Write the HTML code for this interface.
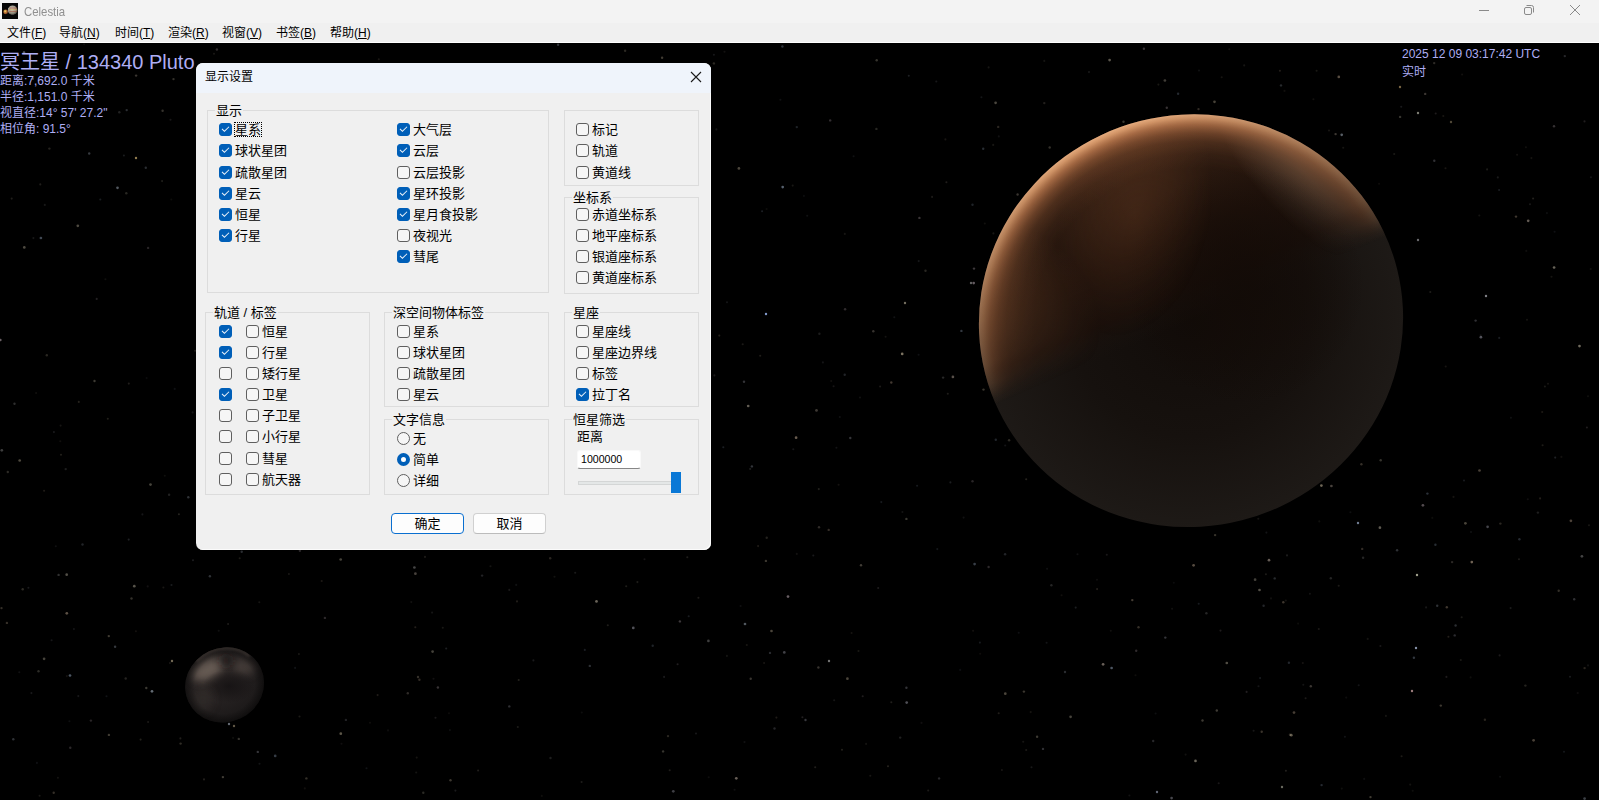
<!DOCTYPE html>
<html lang="zh-CN">
<head>
<meta charset="utf-8">
<title>Celestia</title>
<style>
*{box-sizing:border-box;margin:0;padding:0}
html,body{width:1599px;height:800px;overflow:hidden;background:#000}
body{position:relative;font-family:"Liberation Sans","Noto Sans CJK SC",sans-serif;font-size:12px;color:#000}
i{font-style:normal;display:block}
#titlebar{position:absolute;left:0;top:0;width:1599px;height:23px;background:#f3f3f3}
#menubar{position:absolute;left:0;top:23px;width:1599px;height:20px;background:#f0f0f0;border-bottom:1px solid #fff}
#apptitle{position:absolute;left:24px;top:4px;font-size:13px;line-height:15px;color:#909090;transform:scaleX(.875);transform-origin:left center;white-space:nowrap}
.mi{position:absolute;top:2px;line-height:16px;font-size:12px;white-space:nowrap}
.mi u{text-decoration:underline;text-underline-offset:1px}
#sky{position:absolute;left:0;top:43px;width:1599px;height:757px;background:#000;overflow:hidden}
.ov{position:absolute;color:#aeaef4;white-space:nowrap}
#dlg{position:absolute;left:196px;top:63px;width:515.3px;height:487px;background:#f0f0f0;border-radius:7px;overflow:hidden;box-shadow:inset -1px -1px 0 #fbfbfb}
#dlgtitle{position:absolute;left:0;top:0;width:100%;height:30px;background:#eff4fb}
#dlgtitle span{position:absolute;left:9px;top:6px;line-height:16px}
#dlgbody{position:absolute;left:-196px;top:-63px;width:1599px;height:800px}
.grp{position:absolute;border:1px solid #dcdcdc}
.lg{position:absolute;background:#f0f0f0;font-size:13px;line-height:16px;padding:0 1px;white-space:nowrap}
.cb{position:absolute;width:13px;height:13px;border:1px solid #5f5f5f;border-radius:3px;background:#f6f6f6}
.cb.on{background:#005fb8;border-color:#005fb8}
.cb.on:after{content:"";position:absolute;left:1.7px;top:2.2px;width:6.4px;height:3.2px;border-left:1px solid rgba(255,255,255,.92);border-bottom:1px solid rgba(255,255,255,.92);transform:rotate(-45deg)}
.rb{position:absolute;width:13px;height:13px;border:1px solid #5f5f5f;border-radius:50%;background:#f6f6f6}
.rb.on{border:4px solid #005fb8;background:#fff}
.lb{position:absolute;font-size:13px;line-height:16px;white-space:nowrap}
.focus{position:absolute;border:1px dotted #000}
.btn{position:absolute;font-size:13px;height:21px;border:1px solid #d0d0d0;border-bottom-color:#bcbcbc;border-radius:4px;background:#fdfdfd;text-align:center;line-height:19px}
.btn.def{border:1px solid #0a6fd0}
.inp{position:absolute;background:#fff;border:1px solid #f9f9f9;border-bottom:1px solid #868686;border-radius:3px}
.inp span{position:absolute;left:3px;top:1px;font-size:10.6px;line-height:15px}
.track{position:absolute;background:#e4e7e7;border:1px solid #d4d6d6}
.thumb{position:absolute;background:#0a78d6}
</style>
</head>
<body>
<div id="titlebar">
<svg id="appicon" width="16" height="16" viewBox="0 0 16 16" style="position:absolute;left:2px;top:3px">
<rect width="16" height="16" fill="#050505"/>
<defs><radialGradient id="jg" cx="0.45" cy="0.4" r="0.6"><stop offset="0" stop-color="#d8d4c8"/><stop offset="0.65" stop-color="#9a968a"/><stop offset="1" stop-color="#24221e"/></radialGradient>
<radialGradient id="ig" cx="0.4" cy="0.4" r="0.6"><stop offset="0" stop-color="#d8a848"/><stop offset="0.7" stop-color="#b06030"/><stop offset="1" stop-color="#4a2810"/></radialGradient></defs>
<clipPath id="jc"><circle cx="10.6" cy="7.3" r="5"/></clipPath>
<g clip-path="url(#jc)">
<circle cx="10.6" cy="7.3" r="5" fill="url(#jg)"/>
<rect x="7.5" y="4.6" width="7.6" height="0.9" fill="#a8482a" opacity=".75"/>
<rect x="7" y="6.3" width="8.4" height="0.9" fill="#c8a040" opacity=".7"/>
<rect x="7.2" y="7.9" width="8.2" height="0.9" fill="#a04a30" opacity=".7"/>
<rect x="8" y="9.6" width="6.5" height="0.8" fill="#8a8468" opacity=".6"/>
</g>
<circle cx="3.7" cy="8.9" r="2.4" fill="url(#ig)"/>
<circle cx="3.2" cy="8.2" r="0.9" fill="#e8d060" opacity=".8"/>
</svg>
<div id="apptitle">Celestia</div>
<svg class="wc" width="12" height="12" viewBox="0 0 12 12" style="position:absolute;left:1478px;top:4px"><path d="M1 6.5H11" stroke="#8a8a8a" stroke-width="1" fill="none"/></svg>
<svg class="wc" width="12" height="12" viewBox="0 0 12 12" style="position:absolute;left:1523px;top:4px"><rect x="1.5" y="3.5" width="7" height="7" rx="1.5" stroke="#8a8a8a" fill="none"/><path d="M3.5 1.5H8.5a2 2 0 0 1 2 2V8.5" stroke="#8a8a8a" fill="none"/></svg>
<svg class="wc" width="12" height="12" viewBox="0 0 12 12" style="position:absolute;left:1569px;top:4px"><path d="M1 1L11 11M11 1L1 11" stroke="#8a8a8a" stroke-width="1" fill="none"/></svg>
</div>
<div id="menubar">
<span class="mi" style="left:7px">文件(<u>F</u>)</span>
<span class="mi" style="left:59px">导航(<u>N</u>)</span>
<span class="mi" style="left:115px">时间(<u>T</u>)</span>
<span class="mi" style="left:168px">渲染(<u>R</u>)</span>
<span class="mi" style="left:222px">视窗(<u>V</u>)</span>
<span class="mi" style="left:276px">书签(<u>B</u>)</span>
<span class="mi" style="left:330px">帮助(<u>H</u>)</span>
</div>
<div id="sky">
<svg id="stars" width="1599" height="757" viewBox="0 43 1599 757" style="position:absolute;left:0;top:0">
<circle cx="517.8" cy="158.0" r="1.20" fill="#8fa0b8" opacity="0.21"/><circle cx="150.5" cy="484.6" r="1.35" fill="#a8a190" opacity="0.42"/><circle cx="693.4" cy="96.8" r="1.05" fill="#c0a890" opacity="0.13"/><circle cx="198.0" cy="212.8" r="1.20" fill="#c0a890" opacity="0.35"/><circle cx="936.3" cy="81.5" r="1.05" fill="#9a9aa8" opacity="0.15"/><circle cx="463.1" cy="153.1" r="1.05" fill="#9a9aa8" opacity="0.12"/>
<circle cx="164.8" cy="475.8" r="1.05" fill="#a8a190" opacity="0.09"/><circle cx="902.4" cy="512.0" r="1.05" fill="#8e8e8e" opacity="0.14"/><circle cx="744.5" cy="742.1" r="1.05" fill="#9a9aa8" opacity="0.11"/><circle cx="1117.7" cy="228.5" r="1.20" fill="#8e8e8e" opacity="0.28"/><circle cx="1166.4" cy="261.7" r="1.35" fill="#a89a8e" opacity="0.39"/><circle cx="263.8" cy="302.6" r="1.35" fill="#a8a190" opacity="0.48"/>
<circle cx="1222.5" cy="477.2" r="1.20" fill="#8e8e8e" opacity="0.25"/><circle cx="950.4" cy="482.4" r="1.05" fill="#9aa6b4" opacity="0.18"/><circle cx="758.1" cy="546.1" r="1.05" fill="#c0a890" opacity="0.16"/><circle cx="1588.0" cy="665.4" r="1.05" fill="#8e8e8e" opacity="0.13"/><circle cx="36.1" cy="393.0" r="1.05" fill="#b9b09c" opacity="0.09"/><circle cx="348.9" cy="261.3" r="1.20" fill="#b0a0a8" opacity="0.26"/>
<circle cx="128.8" cy="383.6" r="1.05" fill="#a89a8e" opacity="0.19"/><circle cx="1381.5" cy="254.5" r="1.05" fill="#a89a8e" opacity="0.12"/><circle cx="1531.4" cy="158.1" r="1.05" fill="#c4b69a" opacity="0.11"/><circle cx="19.3" cy="672.3" r="1.05" fill="#9a9aa8" opacity="0.11"/><circle cx="669.9" cy="323.2" r="1.20" fill="#8fa0b8" opacity="0.35"/><circle cx="1519.4" cy="539.2" r="1.20" fill="#8fa0b8" opacity="0.27"/>
<circle cx="627.4" cy="345.6" r="1.05" fill="#b9b09c" opacity="0.16"/><circle cx="304.8" cy="788.4" r="1.05" fill="#c0a890" opacity="0.09"/><circle cx="84.1" cy="44.2" r="1.05" fill="#8e8e8e" opacity="0.09"/><circle cx="981.4" cy="97.2" r="1.05" fill="#9aa6b4" opacity="0.13"/><circle cx="1527.8" cy="499.3" r="1.05" fill="#b0a0a8" opacity="0.09"/><circle cx="1588.0" cy="396.3" r="1.05" fill="#a8a190" opacity="0.09"/>
<circle cx="1198.7" cy="603.7" r="1.05" fill="#8fa0b8" opacity="0.16"/><circle cx="36.9" cy="762.9" r="1.05" fill="#8fa0b8" opacity="0.10"/><circle cx="1461.7" cy="617.2" r="1.05" fill="#a8a190" opacity="0.16"/><circle cx="1113.2" cy="241.4" r="1.05" fill="#c4b69a" opacity="0.10"/><circle cx="851.6" cy="633.0" r="1.05" fill="#c4b69a" opacity="0.11"/><circle cx="1288.9" cy="662.7" r="1.20" fill="#8fa0b8" opacity="0.24"/>
<circle cx="788.0" cy="596.6" r="1.35" fill="#b0a0a8" opacity="0.59"/><circle cx="414.4" cy="567.5" r="1.35" fill="#8e8e8e" opacity="0.49"/><circle cx="1527.0" cy="319.7" r="1.05" fill="#c4b69a" opacity="0.11"/><circle cx="540.0" cy="408.9" r="1.35" fill="#b9b09c" opacity="0.54"/><circle cx="766.7" cy="537.7" r="1.20" fill="#a8a190" opacity="0.21"/><circle cx="1454.7" cy="635.4" r="1.20" fill="#9a9aa8" opacity="0.28"/>
<circle cx="693.8" cy="524.7" r="1.05" fill="#a89a8e" opacity="0.19"/><circle cx="740.6" cy="606.0" r="1.05" fill="#9a9aa8" opacity="0.10"/><circle cx="44.1" cy="490.7" r="1.05" fill="#c0a890" opacity="0.16"/><circle cx="1321.6" cy="785.1" r="1.20" fill="#8fa0b8" opacity="0.26"/><circle cx="876.7" cy="60.2" r="1.20" fill="#a8a190" opacity="0.32"/><circle cx="842.0" cy="749.8" r="1.05" fill="#c4b69a" opacity="0.18"/>
<circle cx="44.8" cy="204.9" r="1.05" fill="#8e8e8e" opacity="0.17"/><circle cx="414.7" cy="360.8" r="1.05" fill="#8e8e8e" opacity="0.19"/><circle cx="1435.4" cy="544.8" r="1.20" fill="#8fa0b8" opacity="0.28"/><circle cx="209.1" cy="158.8" r="1.05" fill="#9a9aa8" opacity="0.18"/><circle cx="973.1" cy="630.7" r="1.05" fill="#c0a890" opacity="0.10"/><circle cx="1159.6" cy="464.7" r="1.05" fill="#8fa0b8" opacity="0.14"/>
<circle cx="771.5" cy="631.0" r="1.35" fill="#c4b69a" opacity="0.38"/><circle cx="442.8" cy="627.8" r="1.05" fill="#a8a190" opacity="0.15"/><circle cx="708.8" cy="507.1" r="1.05" fill="#9aa6b4" opacity="0.14"/><circle cx="723.3" cy="447.2" r="1.05" fill="#8fa0b8" opacity="0.19"/><circle cx="1401.6" cy="756.3" r="1.05" fill="#c4b69a" opacity="0.15"/><circle cx="1343.2" cy="147.7" r="1.05" fill="#a8a190" opacity="0.13"/>
<circle cx="1073.2" cy="367.8" r="1.05" fill="#a8a190" opacity="0.12"/><circle cx="1434.3" cy="160.8" r="1.20" fill="#9a9aa8" opacity="0.31"/><circle cx="404.7" cy="147.8" r="1.05" fill="#a8a190" opacity="0.17"/><circle cx="636.8" cy="412.4" r="1.35" fill="#9a9aa8" opacity="0.60"/><circle cx="1129.4" cy="795.5" r="1.05" fill="#8e8e8e" opacity="0.13"/><circle cx="509.3" cy="589.9" r="1.05" fill="#b0a0a8" opacity="0.15"/>
<circle cx="1124.3" cy="334.6" r="1.05" fill="#a8a190" opacity="0.12"/><circle cx="180.4" cy="738.4" r="1.05" fill="#a8a190" opacity="0.19"/><circle cx="424.6" cy="73.9" r="1.20" fill="#9a9aa8" opacity="0.24"/><circle cx="1310.8" cy="686.3" r="1.20" fill="#a89a8e" opacity="0.35"/><circle cx="238.8" cy="738.9" r="1.20" fill="#a8a190" opacity="0.31"/><circle cx="446.2" cy="648.5" r="1.05" fill="#9aa6b4" opacity="0.19"/>
<circle cx="1500.4" cy="523.6" r="1.20" fill="#c4b69a" opacity="0.21"/><circle cx="106.5" cy="696.3" r="1.05" fill="#8fa0b8" opacity="0.12"/><circle cx="668.0" cy="736.1" r="1.20" fill="#c4b69a" opacity="0.21"/><circle cx="1500.1" cy="776.7" r="1.05" fill="#9aa6b4" opacity="0.10"/><circle cx="1005.2" cy="445.5" r="1.05" fill="#9a9aa8" opacity="0.13"/><circle cx="432.6" cy="651.6" r="1.35" fill="#b9b09c" opacity="0.37"/>
<circle cx="1172.2" cy="460.6" r="1.05" fill="#b0a0a8" opacity="0.14"/><circle cx="169.9" cy="663.1" r="1.05" fill="#a89a8e" opacity="0.14"/><circle cx="1551.5" cy="276.7" r="1.05" fill="#c4b69a" opacity="0.11"/><circle cx="1330.8" cy="578.3" r="1.20" fill="#8e8e8e" opacity="0.26"/><circle cx="1570.0" cy="676.8" r="1.05" fill="#9aa6b4" opacity="0.16"/><circle cx="688.8" cy="85.9" r="1.20" fill="#8fa0b8" opacity="0.26"/>
<circle cx="1072.2" cy="257.1" r="1.05" fill="#b0a0a8" opacity="0.12"/><circle cx="296.4" cy="247.4" r="1.05" fill="#8e8e8e" opacity="0.12"/><circle cx="1555.2" cy="457.6" r="1.05" fill="#9aa6b4" opacity="0.20"/><circle cx="348.4" cy="182.3" r="1.05" fill="#9aa6b4" opacity="0.09"/><circle cx="803.9" cy="195.9" r="1.05" fill="#9aa6b4" opacity="0.08"/><circle cx="1306.5" cy="152.8" r="1.20" fill="#9aa6b4" opacity="0.26"/>
<circle cx="486.5" cy="220.0" r="1.20" fill="#9a9aa8" opacity="0.28"/><circle cx="1051.4" cy="585.3" r="1.20" fill="#8e8e8e" opacity="0.26"/><circle cx="1152.4" cy="417.6" r="1.05" fill="#9a9aa8" opacity="0.15"/><circle cx="70.0" cy="675.5" r="1.35" fill="#8fa0b8" opacity="0.54"/><circle cx="222.8" cy="440.0" r="1.05" fill="#b9b09c" opacity="0.18"/><circle cx="1321.4" cy="485.6" r="1.35" fill="#c4b69a" opacity="0.56"/>
<circle cx="136.1" cy="75.6" r="1.20" fill="#a89a8e" opacity="0.35"/><circle cx="1336.5" cy="466.2" r="1.20" fill="#c4b69a" opacity="0.30"/><circle cx="782.4" cy="46.5" r="1.20" fill="#8fa0b8" opacity="0.32"/><circle cx="1435.7" cy="113.5" r="1.05" fill="#b0a0a8" opacity="0.17"/><circle cx="403.3" cy="100.3" r="1.05" fill="#c4b69a" opacity="0.17"/><circle cx="368.9" cy="535.3" r="1.05" fill="#a8a190" opacity="0.18"/>
<circle cx="765.9" cy="560.9" r="1.20" fill="#c4b69a" opacity="0.30"/><circle cx="123.9" cy="155.5" r="1.05" fill="#9aa6b4" opacity="0.17"/><circle cx="993.2" cy="144.9" r="1.05" fill="#a8a190" opacity="0.14"/><circle cx="1106.8" cy="554.8" r="1.05" fill="#b0a0a8" opacity="0.14"/><circle cx="745.0" cy="624.0" r="1.35" fill="#9aa6b4" opacity="0.52"/><circle cx="1564.0" cy="751.8" r="1.05" fill="#8fa0b8" opacity="0.14"/>
<circle cx="1548.0" cy="383.8" r="1.05" fill="#c4b69a" opacity="0.11"/><circle cx="119.3" cy="112.3" r="1.20" fill="#8e8e8e" opacity="0.24"/><circle cx="212.0" cy="664.1" r="1.05" fill="#8e8e8e" opacity="0.19"/><circle cx="370.0" cy="722.7" r="1.05" fill="#b9b09c" opacity="0.08"/><circle cx="1519.0" cy="559.3" r="1.05" fill="#a89a8e" opacity="0.17"/><circle cx="550.0" cy="283.0" r="1.20" fill="#8e8e8e" opacity="0.20"/>
<circle cx="1341.7" cy="134.8" r="1.35" fill="#9aa6b4" opacity="0.57"/><circle cx="404.9" cy="93.1" r="1.05" fill="#a8a190" opacity="0.18"/><circle cx="576.8" cy="367.6" r="1.05" fill="#a8a190" opacity="0.09"/><circle cx="82.5" cy="544.5" r="1.20" fill="#9aa6b4" opacity="0.22"/><circle cx="697.5" cy="282.6" r="1.20" fill="#a89a8e" opacity="0.33"/><circle cx="1413.9" cy="657.8" r="1.20" fill="#8fa0b8" opacity="0.35"/>
<circle cx="878.2" cy="588.0" r="1.05" fill="#b0a0a8" opacity="0.17"/><circle cx="983.2" cy="148.8" r="1.20" fill="#8fa0b8" opacity="0.28"/><circle cx="203.6" cy="401.0" r="1.05" fill="#9aa6b4" opacity="0.12"/><circle cx="649.5" cy="224.4" r="1.05" fill="#a8a190" opacity="0.16"/><circle cx="267.6" cy="166.2" r="1.05" fill="#b0a0a8" opacity="0.19"/><circle cx="880.1" cy="386.5" r="1.05" fill="#a89a8e" opacity="0.17"/>
<circle cx="223.2" cy="189.5" r="1.05" fill="#a8a190" opacity="0.12"/><circle cx="510.5" cy="322.4" r="1.20" fill="#b9b09c" opacity="0.23"/><circle cx="1198.7" cy="356.1" r="1.05" fill="#a89a8e" opacity="0.14"/><circle cx="432.1" cy="612.6" r="1.05" fill="#8e8e8e" opacity="0.15"/><circle cx="201.3" cy="424.6" r="1.20" fill="#c4b69a" opacity="0.34"/><circle cx="148.1" cy="722.0" r="1.05" fill="#a89a8e" opacity="0.16"/>
<circle cx="1525.4" cy="685.6" r="1.20" fill="#b9b09c" opacity="0.20"/><circle cx="679.9" cy="621.4" r="1.20" fill="#b0a0a8" opacity="0.35"/><circle cx="0.3" cy="340.0" r="1.35" fill="#b0a0a8" opacity="0.60"/><circle cx="1554.6" cy="231.8" r="1.05" fill="#8fa0b8" opacity="0.10"/><circle cx="1554.0" cy="126.3" r="1.20" fill="#b0a0a8" opacity="0.31"/><circle cx="135.9" cy="631.3" r="1.05" fill="#c0a890" opacity="0.10"/>
<circle cx="1471.0" cy="532.0" r="1.05" fill="#9aa6b4" opacity="0.10"/><circle cx="844.7" cy="374.7" r="1.20" fill="#9aa6b4" opacity="0.22"/><circle cx="838.6" cy="484.7" r="1.05" fill="#c0a890" opacity="0.11"/><circle cx="1.8" cy="450.3" r="1.35" fill="#8e8e8e" opacity="0.44"/><circle cx="1030.7" cy="712.1" r="1.05" fill="#c4b69a" opacity="0.11"/><circle cx="46.8" cy="355.3" r="1.20" fill="#c4b69a" opacity="0.21"/>
<circle cx="796.8" cy="553.9" r="1.05" fill="#a89a8e" opacity="0.11"/><circle cx="1479.3" cy="215.5" r="1.05" fill="#a89a8e" opacity="0.12"/><circle cx="579.3" cy="343.6" r="1.05" fill="#8fa0b8" opacity="0.12"/><circle cx="107.8" cy="418.7" r="1.05" fill="#c4b69a" opacity="0.17"/><circle cx="369.1" cy="211.4" r="1.20" fill="#c0a890" opacity="0.25"/><circle cx="792.7" cy="185.6" r="1.05" fill="#b9b09c" opacity="0.13"/>
<circle cx="1517.1" cy="154.7" r="1.05" fill="#c0a890" opacity="0.11"/><circle cx="226.9" cy="83.2" r="1.05" fill="#8e8e8e" opacity="0.13"/><circle cx="1171.6" cy="798.1" r="1.35" fill="#9a9aa8" opacity="0.46"/><circle cx="1043.3" cy="440.7" r="1.05" fill="#a89a8e" opacity="0.12"/><circle cx="1341.8" cy="788.6" r="1.05" fill="#a8a190" opacity="0.09"/><circle cx="447.4" cy="309.7" r="1.35" fill="#c4b69a" opacity="0.40"/>
<circle cx="607.8" cy="625.2" r="1.05" fill="#a8a190" opacity="0.18"/><circle cx="78.8" cy="401.9" r="1.05" fill="#c4b69a" opacity="0.19"/><circle cx="517.0" cy="601.4" r="1.05" fill="#c4b69a" opacity="0.16"/><circle cx="1298.1" cy="623.6" r="1.05" fill="#a8a190" opacity="0.08"/><circle cx="1284.5" cy="90.9" r="1.05" fill="#c0a890" opacity="0.09"/><circle cx="542.2" cy="249.9" r="1.35" fill="#9aa6b4" opacity="0.54"/>
<circle cx="1193.6" cy="565.3" r="1.35" fill="#c0a890" opacity="0.45"/><circle cx="1465.4" cy="523.3" r="1.35" fill="#c4b69a" opacity="0.37"/><circle cx="171.5" cy="585.0" r="1.05" fill="#9aa6b4" opacity="0.17"/><circle cx="1460.8" cy="660.0" r="1.05" fill="#b9b09c" opacity="0.14"/><circle cx="1283.3" cy="602.3" r="1.20" fill="#c0a890" opacity="0.32"/><circle cx="377.6" cy="695.1" r="1.05" fill="#c0a890" opacity="0.17"/>
<circle cx="126.3" cy="193.2" r="1.20" fill="#a8a190" opacity="0.24"/><circle cx="1038.6" cy="408.2" r="1.05" fill="#a89a8e" opacity="0.10"/><circle cx="1412.7" cy="790.8" r="1.05" fill="#a8a190" opacity="0.09"/><circle cx="673.3" cy="791.3" r="1.35" fill="#9a9aa8" opacity="0.41"/><circle cx="666.5" cy="513.0" r="1.20" fill="#a8a190" opacity="0.32"/><circle cx="1246.8" cy="266.2" r="1.05" fill="#9aa6b4" opacity="0.11"/>
<circle cx="1180.2" cy="194.6" r="1.05" fill="#9a9aa8" opacity="0.11"/><circle cx="449.9" cy="730.1" r="1.05" fill="#9aa6b4" opacity="0.09"/><circle cx="1586.9" cy="427.5" r="1.05" fill="#b0a0a8" opacity="0.18"/><circle cx="1584.5" cy="121.4" r="1.05" fill="#b0a0a8" opacity="0.18"/><circle cx="1462.1" cy="74.5" r="1.05" fill="#c4b69a" opacity="0.09"/><circle cx="960.2" cy="669.9" r="1.05" fill="#8fa0b8" opacity="0.09"/>
<circle cx="1384.9" cy="383.5" r="1.05" fill="#b9b09c" opacity="0.17"/><circle cx="169.1" cy="494.7" r="1.20" fill="#8e8e8e" opacity="0.23"/><circle cx="543.7" cy="77.4" r="1.35" fill="#c4b69a" opacity="0.37"/><circle cx="1302.8" cy="663.0" r="1.05" fill="#c0a890" opacity="0.12"/><circle cx="499.2" cy="197.8" r="1.20" fill="#a8a190" opacity="0.29"/><circle cx="652.7" cy="645.7" r="1.20" fill="#8fa0b8" opacity="0.22"/>
<circle cx="145.8" cy="167.7" r="1.20" fill="#9aa6b4" opacity="0.27"/><circle cx="1067.8" cy="359.9" r="1.05" fill="#8e8e8e" opacity="0.17"/><circle cx="662.1" cy="57.8" r="1.20" fill="#c4b69a" opacity="0.33"/><circle cx="624.8" cy="350.2" r="1.35" fill="#9a9aa8" opacity="0.49"/><circle cx="677.6" cy="664.2" r="1.05" fill="#b0a0a8" opacity="0.19"/><circle cx="1236.1" cy="142.3" r="1.05" fill="#a89a8e" opacity="0.10"/>
<circle cx="142.4" cy="514.4" r="1.05" fill="#9a9aa8" opacity="0.14"/><circle cx="556.4" cy="166.3" r="1.05" fill="#a89a8e" opacity="0.09"/><circle cx="784.3" cy="652.4" r="1.35" fill="#9a9aa8" opacity="0.42"/><circle cx="1338.8" cy="76.9" r="1.35" fill="#c0a890" opacity="0.45"/><circle cx="1480.9" cy="337.2" r="1.35" fill="#9a9aa8" opacity="0.54"/><circle cx="1023.9" cy="691.6" r="1.20" fill="#c4b69a" opacity="0.30"/>
<circle cx="1325.9" cy="182.3" r="1.05" fill="#8fa0b8" opacity="0.13"/><circle cx="250.2" cy="315.6" r="1.05" fill="#c4b69a" opacity="0.20"/><circle cx="65.7" cy="469.1" r="1.20" fill="#8e8e8e" opacity="0.21"/><circle cx="188.3" cy="497.2" r="1.20" fill="#9aa6b4" opacity="0.30"/><circle cx="1037.8" cy="277.0" r="1.05" fill="#8e8e8e" opacity="0.13"/><circle cx="714.4" cy="375.4" r="1.05" fill="#b0a0a8" opacity="0.15"/>
<circle cx="744.0" cy="381.8" r="1.20" fill="#9a9aa8" opacity="0.33"/><circle cx="1296.0" cy="346.7" r="1.05" fill="#8e8e8e" opacity="0.12"/><circle cx="146.6" cy="378.1" r="1.05" fill="#9a9aa8" opacity="0.08"/><circle cx="131.5" cy="598.5" r="1.20" fill="#b9b09c" opacity="0.28"/><circle cx="1202.5" cy="720.5" r="1.20" fill="#b9b09c" opacity="0.33"/><circle cx="1370.5" cy="797.1" r="1.20" fill="#c4b69a" opacity="0.33"/>
<circle cx="210.5" cy="713.6" r="1.05" fill="#9a9aa8" opacity="0.18"/><circle cx="1097.1" cy="589.1" r="1.05" fill="#c0a890" opacity="0.18"/><circle cx="1209.1" cy="164.0" r="1.35" fill="#b0a0a8" opacity="0.44"/><circle cx="229.6" cy="423.7" r="1.35" fill="#9aa6b4" opacity="0.42"/><circle cx="984.8" cy="223.5" r="1.05" fill="#a89a8e" opacity="0.10"/><circle cx="257.8" cy="751.9" r="1.20" fill="#9a9aa8" opacity="0.34"/>
<circle cx="1266.6" cy="243.8" r="1.20" fill="#8e8e8e" opacity="0.21"/><circle cx="1544.9" cy="386.5" r="1.05" fill="#a8a190" opacity="0.16"/><circle cx="403.0" cy="449.0" r="1.20" fill="#8e8e8e" opacity="0.32"/><circle cx="423.3" cy="792.8" r="1.20" fill="#a8a190" opacity="0.26"/><circle cx="707.2" cy="177.6" r="1.20" fill="#8fa0b8" opacity="0.21"/><circle cx="405.6" cy="527.3" r="1.35" fill="#8e8e8e" opacity="0.53"/>
<circle cx="1172.1" cy="608.8" r="1.05" fill="#a89a8e" opacity="0.11"/><circle cx="667.9" cy="319.3" r="1.05" fill="#c0a890" opacity="0.14"/><circle cx="1044.3" cy="60.9" r="1.05" fill="#a8a190" opacity="0.12"/><circle cx="836.4" cy="447.8" r="1.05" fill="#9a9aa8" opacity="0.12"/><circle cx="326.5" cy="515.7" r="1.05" fill="#c4b69a" opacity="0.10"/><circle cx="1131.2" cy="384.8" r="1.05" fill="#9aa6b4" opacity="0.10"/>
<circle cx="642.7" cy="243.8" r="1.05" fill="#8fa0b8" opacity="0.16"/><circle cx="1427.4" cy="493.6" r="1.20" fill="#8fa0b8" opacity="0.30"/><circle cx="1172.9" cy="231.9" r="1.35" fill="#8fa0b8" opacity="0.37"/><circle cx="40.3" cy="184.4" r="1.05" fill="#a8a190" opacity="0.19"/><circle cx="19.7" cy="460.5" r="1.35" fill="#c4b69a" opacity="0.40"/><circle cx="828.7" cy="529.9" r="1.20" fill="#c0a890" opacity="0.27"/>
<circle cx="279.2" cy="277.9" r="1.05" fill="#b0a0a8" opacity="0.09"/><circle cx="1143.9" cy="48.8" r="1.20" fill="#b0a0a8" opacity="0.32"/><circle cx="128.7" cy="539.6" r="1.05" fill="#9aa6b4" opacity="0.20"/><circle cx="371.4" cy="73.3" r="1.05" fill="#9aa6b4" opacity="0.17"/><circle cx="1138.0" cy="245.1" r="1.20" fill="#8fa0b8" opacity="0.27"/><circle cx="1554.1" cy="267.5" r="1.35" fill="#a8a190" opacity="0.62"/>
<circle cx="1407.2" cy="55.5" r="1.05" fill="#c4b69a" opacity="0.11"/><circle cx="1510.6" cy="608.1" r="1.05" fill="#8e8e8e" opacity="0.19"/><circle cx="961.4" cy="330.9" r="1.20" fill="#8fa0b8" opacity="0.35"/><circle cx="750.7" cy="678.8" r="1.20" fill="#a89a8e" opacity="0.34"/><circle cx="1528.2" cy="220.8" r="1.35" fill="#a89a8e" opacity="0.59"/><circle cx="995.6" cy="102.8" r="1.35" fill="#b9b09c" opacity="0.40"/>
<circle cx="178.9" cy="514.2" r="1.05" fill="#b9b09c" opacity="0.20"/><circle cx="49.4" cy="148.6" r="1.20" fill="#a8a190" opacity="0.21"/><circle cx="1178.1" cy="93.7" r="1.20" fill="#8fa0b8" opacity="0.26"/><circle cx="1425.2" cy="93.9" r="1.20" fill="#a89a8e" opacity="0.35"/><circle cx="171.3" cy="199.5" r="1.05" fill="#a8a190" opacity="0.08"/><circle cx="1319.3" cy="521.4" r="1.05" fill="#a8a190" opacity="0.09"/>
<circle cx="1266.4" cy="532.6" r="1.05" fill="#9aa6b4" opacity="0.12"/><circle cx="33.4" cy="238.1" r="1.05" fill="#8e8e8e" opacity="0.17"/><circle cx="1455.6" cy="625.5" r="1.20" fill="#9aa6b4" opacity="0.28"/><circle cx="988.6" cy="67.4" r="1.05" fill="#a8a190" opacity="0.13"/><circle cx="554.5" cy="576.7" r="1.05" fill="#a8a190" opacity="0.11"/><circle cx="918.7" cy="261.1" r="1.05" fill="#9aa6b4" opacity="0.14"/>
<circle cx="1218.7" cy="783.3" r="1.05" fill="#b0a0a8" opacity="0.14"/><circle cx="1111.6" cy="668.0" r="1.35" fill="#8fa0b8" opacity="0.53"/><circle cx="416.7" cy="757.6" r="1.05" fill="#c4b69a" opacity="0.11"/><circle cx="796.8" cy="127.1" r="1.20" fill="#8fa0b8" opacity="0.21"/><circle cx="1258.3" cy="518.7" r="1.05" fill="#a89a8e" opacity="0.13"/><circle cx="1426.1" cy="607.4" r="1.05" fill="#8e8e8e" opacity="0.16"/>
<circle cx="329.6" cy="243.0" r="1.35" fill="#a89a8e" opacity="0.51"/><circle cx="1570.9" cy="520.8" r="1.35" fill="#c0a890" opacity="0.40"/><circle cx="1206.4" cy="613.3" r="1.20" fill="#8e8e8e" opacity="0.26"/><circle cx="834.2" cy="700.2" r="1.05" fill="#8e8e8e" opacity="0.15"/><circle cx="271.1" cy="375.7" r="1.20" fill="#9a9aa8" opacity="0.29"/><circle cx="534.2" cy="529.9" r="1.20" fill="#9aa6b4" opacity="0.28"/>
<circle cx="482.1" cy="575.6" r="1.20" fill="#9a9aa8" opacity="0.22"/><circle cx="1558.7" cy="590.7" r="1.20" fill="#c4b69a" opacity="0.26"/><circle cx="524.6" cy="187.1" r="1.35" fill="#a8a190" opacity="0.57"/><circle cx="263.2" cy="541.4" r="1.05" fill="#9a9aa8" opacity="0.10"/><circle cx="1271.0" cy="598.4" r="1.05" fill="#a8a190" opacity="0.10"/><circle cx="449.0" cy="713.2" r="1.05" fill="#a89a8e" opacity="0.08"/>
<circle cx="1108.8" cy="422.4" r="1.20" fill="#9a9aa8" opacity="0.27"/><circle cx="411.3" cy="602.1" r="1.05" fill="#a89a8e" opacity="0.11"/><circle cx="1121.2" cy="488.1" r="1.20" fill="#c0a890" opacity="0.34"/><circle cx="1363.1" cy="557.8" r="1.20" fill="#8e8e8e" opacity="0.27"/><circle cx="415.4" cy="573.7" r="1.35" fill="#a89a8e" opacity="0.43"/><circle cx="1140.3" cy="520.0" r="1.05" fill="#b0a0a8" opacity="0.13"/>
<circle cx="31.4" cy="693.1" r="1.05" fill="#9a9aa8" opacity="0.16"/><circle cx="1430.3" cy="292.0" r="1.05" fill="#a8a190" opacity="0.18"/><circle cx="61.0" cy="454.8" r="1.05" fill="#c4b69a" opacity="0.17"/><circle cx="830.2" cy="120.4" r="1.20" fill="#b0a0a8" opacity="0.29"/><circle cx="819.0" cy="527.3" r="1.20" fill="#a89a8e" opacity="0.28"/><circle cx="1186.6" cy="389.4" r="1.35" fill="#8fa0b8" opacity="0.41"/>
<circle cx="1219.6" cy="136.5" r="1.35" fill="#b9b09c" opacity="0.46"/><circle cx="403.7" cy="332.7" r="1.05" fill="#a89a8e" opacity="0.09"/><circle cx="1005.1" cy="554.2" r="1.20" fill="#9aa6b4" opacity="0.22"/><circle cx="1185.6" cy="754.6" r="1.05" fill="#a89a8e" opacity="0.11"/><circle cx="738.9" cy="168.4" r="1.35" fill="#c4b69a" opacity="0.38"/><circle cx="750.2" cy="468.9" r="1.05" fill="#8e8e8e" opacity="0.20"/>
<circle cx="1065.0" cy="672.0" r="1.20" fill="#9aa6b4" opacity="0.27"/><circle cx="1215.1" cy="535.1" r="1.20" fill="#c4b69a" opacity="0.28"/><circle cx="427.6" cy="328.4" r="1.05" fill="#9a9aa8" opacity="0.13"/><circle cx="770.0" cy="652.9" r="1.20" fill="#9aa6b4" opacity="0.26"/><circle cx="512.2" cy="410.6" r="1.20" fill="#8e8e8e" opacity="0.21"/><circle cx="244.3" cy="273.2" r="1.05" fill="#c0a890" opacity="0.09"/>
<circle cx="1448.4" cy="636.7" r="1.05" fill="#c0a890" opacity="0.18"/><circle cx="24.0" cy="52.7" r="1.35" fill="#9aa6b4" opacity="0.55"/><circle cx="972.5" cy="481.3" r="1.20" fill="#b0a0a8" opacity="0.23"/><circle cx="554.0" cy="159.4" r="1.35" fill="#9a9aa8" opacity="0.59"/><circle cx="974.6" cy="564.1" r="1.35" fill="#8fa0b8" opacity="0.39"/><circle cx="1260.1" cy="678.1" r="1.05" fill="#8fa0b8" opacity="0.16"/>
<circle cx="125.7" cy="678.5" r="1.20" fill="#a8a190" opacity="0.22"/><circle cx="422.9" cy="221.0" r="1.05" fill="#b9b09c" opacity="0.14"/><circle cx="774.5" cy="728.5" r="1.20" fill="#9a9aa8" opacity="0.24"/><circle cx="862.7" cy="696.3" r="1.05" fill="#b0a0a8" opacity="0.18"/><circle cx="1112.7" cy="420.2" r="1.05" fill="#a89a8e" opacity="0.14"/><circle cx="669.7" cy="770.2" r="1.05" fill="#b9b09c" opacity="0.16"/>
<circle cx="32.9" cy="78.7" r="1.20" fill="#a8a190" opacity="0.36"/><circle cx="816.5" cy="410.4" r="1.35" fill="#a89a8e" opacity="0.37"/><circle cx="999.8" cy="300.0" r="1.20" fill="#b0a0a8" opacity="0.26"/><circle cx="1244.9" cy="462.9" r="1.35" fill="#8e8e8e" opacity="0.44"/><circle cx="675.4" cy="462.8" r="1.20" fill="#b0a0a8" opacity="0.25"/><circle cx="645.6" cy="424.8" r="1.05" fill="#c4b69a" opacity="0.14"/>
<circle cx="1046.6" cy="642.7" r="1.05" fill="#9aa6b4" opacity="0.12"/><circle cx="204.0" cy="779.4" r="1.05" fill="#a89a8e" opacity="0.20"/><circle cx="1155.6" cy="713.5" r="1.05" fill="#9aa6b4" opacity="0.09"/><circle cx="173.5" cy="79.1" r="1.20" fill="#b9b09c" opacity="0.28"/><circle cx="1261.7" cy="731.8" r="1.20" fill="#c0a890" opacity="0.30"/><circle cx="1401.2" cy="106.8" r="1.05" fill="#9a9aa8" opacity="0.16"/>
<circle cx="162.1" cy="181.1" r="1.05" fill="#b9b09c" opacity="0.17"/><circle cx="589.8" cy="665.9" r="1.20" fill="#9aa6b4" opacity="0.29"/><circle cx="1379.1" cy="183.7" r="1.05" fill="#c0a890" opacity="0.08"/><circle cx="1026.2" cy="750.0" r="1.05" fill="#b9b09c" opacity="0.15"/><circle cx="1318.8" cy="629.0" r="1.05" fill="#a89a8e" opacity="0.16"/><circle cx="713.9" cy="54.7" r="1.05" fill="#9a9aa8" opacity="0.15"/>
<circle cx="760.2" cy="355.8" r="1.05" fill="#c4b69a" opacity="0.16"/><circle cx="1432.3" cy="517.9" r="1.05" fill="#a8a190" opacity="0.08"/><circle cx="1577.7" cy="693.0" r="1.05" fill="#b0a0a8" opacity="0.09"/><circle cx="28.4" cy="587.8" r="1.05" fill="#9a9aa8" opacity="0.17"/><circle cx="1475.6" cy="320.6" r="1.20" fill="#9a9aa8" opacity="0.31"/><circle cx="1166.8" cy="107.7" r="1.20" fill="#b0a0a8" opacity="0.31"/>
<circle cx="1070.6" cy="716.8" r="1.35" fill="#b9b09c" opacity="0.38"/><circle cx="18.2" cy="55.1" r="1.20" fill="#a8a190" opacity="0.33"/><circle cx="621.9" cy="280.2" r="1.20" fill="#b0a0a8" opacity="0.35"/><circle cx="973.7" cy="283.1" r="1.35" fill="#b0a0a8" opacity="0.57"/><circle cx="1082.3" cy="153.5" r="1.20" fill="#9a9aa8" opacity="0.26"/><circle cx="1006.9" cy="360.0" r="1.05" fill="#9aa6b4" opacity="0.17"/>
<circle cx="1254.6" cy="472.5" r="1.05" fill="#c0a890" opacity="0.09"/><circle cx="530.9" cy="502.0" r="1.35" fill="#c0a890" opacity="0.60"/><circle cx="1331.4" cy="486.0" r="1.35" fill="#a89a8e" opacity="0.43"/><circle cx="1095.0" cy="498.9" r="1.35" fill="#9aa6b4" opacity="0.59"/><circle cx="1101.0" cy="287.1" r="1.05" fill="#b9b09c" opacity="0.10"/><circle cx="461.3" cy="150.3" r="1.35" fill="#9a9aa8" opacity="0.65"/>
<circle cx="437.9" cy="687.5" r="1.20" fill="#b0a0a8" opacity="0.31"/><circle cx="554.6" cy="108.3" r="1.20" fill="#c4b69a" opacity="0.33"/><circle cx="1259.5" cy="590.0" r="1.35" fill="#b9b09c" opacity="0.45"/><circle cx="1083.6" cy="395.8" r="1.05" fill="#b9b09c" opacity="0.11"/><circle cx="1265.9" cy="391.5" r="1.05" fill="#a8a190" opacity="0.18"/><circle cx="372.4" cy="482.2" r="1.35" fill="#8fa0b8" opacity="0.62"/>
<circle cx="513.3" cy="426.7" r="1.05" fill="#a8a190" opacity="0.11"/><circle cx="288.9" cy="574.0" r="1.05" fill="#a89a8e" opacity="0.15"/><circle cx="1246.6" cy="691.9" r="1.05" fill="#b0a0a8" opacity="0.19"/><circle cx="598.1" cy="124.2" r="1.20" fill="#9a9aa8" opacity="0.33"/><circle cx="504.9" cy="67.0" r="1.05" fill="#a8a190" opacity="0.15"/><circle cx="53.7" cy="792.7" r="1.20" fill="#c0a890" opacity="0.28"/>
<circle cx="341.5" cy="743.7" r="1.05" fill="#b0a0a8" opacity="0.09"/><circle cx="1226.8" cy="663.0" r="1.35" fill="#b9b09c" opacity="0.43"/><circle cx="541.8" cy="795.9" r="1.05" fill="#b9b09c" opacity="0.08"/><circle cx="891.3" cy="702.2" r="1.05" fill="#a8a190" opacity="0.19"/><circle cx="1379.9" cy="527.7" r="1.35" fill="#a8a190" opacity="0.56"/><circle cx="411.3" cy="470.7" r="1.20" fill="#8fa0b8" opacity="0.35"/>
<circle cx="628.6" cy="382.9" r="1.05" fill="#c4b69a" opacity="0.20"/><circle cx="275.2" cy="755.9" r="1.35" fill="#8fa0b8" opacity="0.38"/><circle cx="1446.4" cy="676.9" r="1.05" fill="#b0a0a8" opacity="0.17"/><circle cx="89.2" cy="153.5" r="1.20" fill="#9aa6b4" opacity="0.35"/><circle cx="943.1" cy="377.6" r="1.20" fill="#8e8e8e" opacity="0.28"/><circle cx="411.0" cy="137.9" r="1.05" fill="#c4b69a" opacity="0.10"/>
<circle cx="1291.3" cy="735.2" r="1.35" fill="#c4b69a" opacity="0.50"/><circle cx="1277.4" cy="162.7" r="1.20" fill="#c0a890" opacity="0.21"/><circle cx="1385.9" cy="715.9" r="1.05" fill="#a8a190" opacity="0.13"/><circle cx="1480.6" cy="335.1" r="1.05" fill="#8e8e8e" opacity="0.09"/><circle cx="515.8" cy="220.8" r="1.05" fill="#8e8e8e" opacity="0.12"/><circle cx="354.4" cy="86.9" r="1.20" fill="#9a9aa8" opacity="0.29"/>
<circle cx="701.9" cy="156.9" r="1.05" fill="#b9b09c" opacity="0.11"/><circle cx="433.5" cy="678.7" r="1.05" fill="#b0a0a8" opacity="0.10"/><circle cx="174.7" cy="388.9" r="1.05" fill="#8fa0b8" opacity="0.10"/><circle cx="90.9" cy="720.6" r="1.20" fill="#b0a0a8" opacity="0.23"/><circle cx="1335.6" cy="134.1" r="1.20" fill="#a89a8e" opacity="0.36"/><circle cx="1584.6" cy="798.6" r="1.35" fill="#9aa6b4" opacity="0.39"/>
<circle cx="664.6" cy="166.6" r="1.20" fill="#9a9aa8" opacity="0.36"/><circle cx="1564.8" cy="56.1" r="1.20" fill="#9a9aa8" opacity="0.25"/><circle cx="708.4" cy="640.9" r="1.35" fill="#8e8e8e" opacity="0.44"/><circle cx="696.0" cy="733.5" r="1.05" fill="#9a9aa8" opacity="0.15"/><circle cx="1348.6" cy="438.4" r="1.05" fill="#c0a890" opacity="0.10"/><circle cx="126.7" cy="110.1" r="1.20" fill="#9aa6b4" opacity="0.28"/>
<circle cx="280.3" cy="147.6" r="1.20" fill="#c4b69a" opacity="0.30"/><circle cx="932.1" cy="196.9" r="1.05" fill="#a89a8e" opacity="0.17"/><circle cx="1344.9" cy="736.7" r="1.05" fill="#9aa6b4" opacity="0.12"/><circle cx="1346.2" cy="697.6" r="1.05" fill="#b0a0a8" opacity="0.08"/><circle cx="213.1" cy="547.1" r="1.05" fill="#8e8e8e" opacity="0.15"/><circle cx="58.6" cy="574.9" r="1.20" fill="#8e8e8e" opacity="0.34"/>
<circle cx="831.2" cy="381.0" r="1.05" fill="#c4b69a" opacity="0.09"/><circle cx="1305.6" cy="698.3" r="1.05" fill="#a89a8e" opacity="0.17"/><circle cx="921.5" cy="722.9" r="1.05" fill="#b0a0a8" opacity="0.09"/><circle cx="713.9" cy="63.4" r="1.20" fill="#c4b69a" opacity="0.22"/><circle cx="1546.9" cy="213.1" r="1.05" fill="#9aa6b4" opacity="0.09"/><circle cx="888.0" cy="766.2" r="1.05" fill="#c4b69a" opacity="0.19"/>
<circle cx="418.0" cy="677.0" r="1.20" fill="#c4b69a" opacity="0.27"/><circle cx="1123.5" cy="121.8" r="1.20" fill="#b9b09c" opacity="0.31"/><circle cx="436.5" cy="395.4" r="1.20" fill="#a8a190" opacity="0.32"/><circle cx="195.1" cy="350.7" r="1.05" fill="#c4b69a" opacity="0.15"/><circle cx="235.4" cy="477.1" r="1.20" fill="#b9b09c" opacity="0.23"/><circle cx="1499.2" cy="337.9" r="1.05" fill="#8fa0b8" opacity="0.18"/>
<circle cx="57.9" cy="777.7" r="1.05" fill="#a89a8e" opacity="0.12"/><circle cx="384.4" cy="297.3" r="1.05" fill="#8e8e8e" opacity="0.20"/><circle cx="1303.3" cy="684.8" r="1.05" fill="#8e8e8e" opacity="0.14"/><circle cx="398.6" cy="363.1" r="1.20" fill="#8fa0b8" opacity="0.26"/><circle cx="299.8" cy="289.2" r="1.05" fill="#c4b69a" opacity="0.16"/><circle cx="222.9" cy="777.1" r="1.20" fill="#b9b09c" opacity="0.35"/>
<circle cx="1294.0" cy="712.6" r="1.35" fill="#c0a890" opacity="0.37"/><circle cx="425.0" cy="556.9" r="1.05" fill="#b9b09c" opacity="0.15"/><circle cx="993.4" cy="233.4" r="1.05" fill="#b9b09c" opacity="0.13"/><circle cx="459.7" cy="274.9" r="1.20" fill="#c0a890" opacity="0.22"/><circle cx="1533.6" cy="740.3" r="1.35" fill="#c0a890" opacity="0.38"/><circle cx="853.6" cy="156.2" r="1.05" fill="#9aa6b4" opacity="0.10"/>
<circle cx="1464.0" cy="480.5" r="1.05" fill="#8fa0b8" opacity="0.17"/><circle cx="459.2" cy="387.3" r="1.20" fill="#a89a8e" opacity="0.24"/><circle cx="321.7" cy="581.0" r="1.05" fill="#c0a890" opacity="0.15"/><circle cx="764.1" cy="663.0" r="1.05" fill="#c4b69a" opacity="0.12"/><circle cx="819.4" cy="333.7" r="1.20" fill="#8e8e8e" opacity="0.20"/><circle cx="259.5" cy="763.8" r="1.05" fill="#9aa6b4" opacity="0.12"/>
<circle cx="455.4" cy="790.6" r="1.05" fill="#9a9aa8" opacity="0.17"/><circle cx="881.3" cy="502.1" r="1.05" fill="#8fa0b8" opacity="0.16"/><circle cx="620.2" cy="376.6" r="1.20" fill="#c4b69a" opacity="0.22"/><circle cx="1581.9" cy="556.3" r="1.35" fill="#8e8e8e" opacity="0.48"/><circle cx="224.4" cy="197.1" r="1.20" fill="#8fa0b8" opacity="0.24"/><circle cx="152.0" cy="691.3" r="1.35" fill="#9aa6b4" opacity="0.65"/>
<circle cx="1255.1" cy="579.7" r="1.35" fill="#a8a190" opacity="0.40"/><circle cx="6.9" cy="622.9" r="1.20" fill="#c0a890" opacity="0.28"/><circle cx="239.3" cy="686.6" r="1.05" fill="#a8a190" opacity="0.15"/><circle cx="606.9" cy="385.9" r="1.05" fill="#9aa6b4" opacity="0.17"/><circle cx="564.4" cy="441.7" r="1.20" fill="#b9b09c" opacity="0.30"/><circle cx="1258.5" cy="686.3" r="1.05" fill="#9a9aa8" opacity="0.13"/>
<circle cx="858.5" cy="651.0" r="1.05" fill="#c4b69a" opacity="0.13"/><circle cx="140.6" cy="739.6" r="1.05" fill="#c4b69a" opacity="0.18"/><circle cx="1533.1" cy="198.5" r="1.05" fill="#b9b09c" opacity="0.19"/><circle cx="40.9" cy="238.0" r="1.35" fill="#8fa0b8" opacity="0.45"/><circle cx="1236.8" cy="451.1" r="1.35" fill="#8fa0b8" opacity="0.51"/><circle cx="1162.7" cy="369.1" r="1.05" fill="#8e8e8e" opacity="0.08"/>
<circle cx="724.5" cy="51.8" r="1.05" fill="#a89a8e" opacity="0.11"/><circle cx="598.7" cy="347.1" r="1.20" fill="#c4b69a" opacity="0.29"/><circle cx="1542.2" cy="412.0" r="1.05" fill="#c0a890" opacity="0.15"/><circle cx="548.9" cy="444.8" r="1.20" fill="#8e8e8e" opacity="0.23"/><circle cx="586.3" cy="100.8" r="1.05" fill="#9aa6b4" opacity="0.10"/><circle cx="1103.1" cy="664.3" r="1.35" fill="#a89a8e" opacity="0.62"/>
<circle cx="1009.1" cy="440.2" r="1.20" fill="#c4b69a" opacity="0.23"/><circle cx="659.2" cy="89.5" r="1.20" fill="#c0a890" opacity="0.22"/><circle cx="1589.0" cy="525.2" r="1.05" fill="#b9b09c" opacity="0.13"/><circle cx="490.5" cy="566.2" r="1.05" fill="#a8a190" opacity="0.12"/><circle cx="937.3" cy="549.1" r="1.05" fill="#8fa0b8" opacity="0.14"/><circle cx="906.7" cy="702.6" r="1.35" fill="#9a9aa8" opacity="0.51"/>
<circle cx="918.6" cy="354.8" r="1.05" fill="#8fa0b8" opacity="0.10"/><circle cx="170.5" cy="119.7" r="1.05" fill="#b0a0a8" opacity="0.14"/><circle cx="980.2" cy="653.8" r="1.05" fill="#c0a890" opacity="0.08"/><circle cx="516.2" cy="584.9" r="1.05" fill="#9aa6b4" opacity="0.10"/><circle cx="1005.3" cy="693.7" r="1.35" fill="#c4b69a" opacity="0.38"/><circle cx="719.3" cy="335.6" r="1.05" fill="#c0a890" opacity="0.19"/>
<circle cx="1221.7" cy="77.2" r="1.05" fill="#c4b69a" opacity="0.11"/><circle cx="70.3" cy="747.7" r="1.20" fill="#b0a0a8" opacity="0.25"/><circle cx="485.6" cy="499.5" r="1.35" fill="#a8a190" opacity="0.50"/><circle cx="388.4" cy="338.7" r="1.20" fill="#9aa6b4" opacity="0.24"/><circle cx="637.4" cy="582.1" r="1.05" fill="#a8a190" opacity="0.18"/><circle cx="277.4" cy="314.9" r="1.05" fill="#9aa6b4" opacity="0.20"/>
<circle cx="633.2" cy="318.4" r="1.05" fill="#8e8e8e" opacity="0.18"/><circle cx="644.7" cy="93.5" r="1.05" fill="#8e8e8e" opacity="0.18"/><circle cx="885.6" cy="336.8" r="1.05" fill="#a89a8e" opacity="0.12"/><circle cx="55.8" cy="546.2" r="1.05" fill="#9a9aa8" opacity="0.10"/><circle cx="148.1" cy="247.9" r="1.20" fill="#b0a0a8" opacity="0.22"/><circle cx="746.8" cy="645.0" r="1.05" fill="#c4b69a" opacity="0.12"/>
<circle cx="1155.2" cy="328.9" r="1.35" fill="#b0a0a8" opacity="0.42"/><circle cx="807.2" cy="215.8" r="1.05" fill="#9aa6b4" opacity="0.10"/><circle cx="952.9" cy="376.9" r="1.35" fill="#a89a8e" opacity="0.52"/><circle cx="972.5" cy="204.7" r="1.20" fill="#8fa0b8" opacity="0.22"/><circle cx="146.3" cy="688.0" r="1.20" fill="#b9b09c" opacity="0.32"/><circle cx="1051.4" cy="473.2" r="1.05" fill="#a8a190" opacity="0.13"/>
<circle cx="1110.8" cy="630.8" r="1.05" fill="#a8a190" opacity="0.10"/><circle cx="108.9" cy="734.9" r="1.20" fill="#c4b69a" opacity="0.32"/><circle cx="105.4" cy="279.3" r="1.05" fill="#a89a8e" opacity="0.10"/><circle cx="451.5" cy="349.0" r="1.35" fill="#9a9aa8" opacity="0.58"/><circle cx="1497.8" cy="177.4" r="1.05" fill="#8e8e8e" opacity="0.18"/><circle cx="1434.2" cy="63.1" r="1.20" fill="#a89a8e" opacity="0.27"/>
<circle cx="563.0" cy="519.4" r="1.05" fill="#c0a890" opacity="0.09"/><circle cx="1173.8" cy="582.7" r="1.05" fill="#9a9aa8" opacity="0.08"/><circle cx="688.7" cy="616.3" r="1.05" fill="#8fa0b8" opacity="0.17"/><circle cx="497.2" cy="526.6" r="1.05" fill="#c0a890" opacity="0.18"/><circle cx="796.1" cy="437.7" r="1.35" fill="#c0a890" opacity="0.55"/><circle cx="558.1" cy="44.7" r="1.20" fill="#9aa6b4" opacity="0.32"/>
<circle cx="1440.8" cy="705.6" r="1.20" fill="#c4b69a" opacity="0.31"/><circle cx="1089.0" cy="72.1" r="1.05" fill="#8e8e8e" opacity="0.17"/><circle cx="1198.5" cy="109.1" r="1.20" fill="#c0a890" opacity="0.26"/><circle cx="1325.2" cy="256.6" r="1.05" fill="#a89a8e" opacity="0.19"/><circle cx="707.6" cy="301.3" r="1.05" fill="#b0a0a8" opacity="0.16"/><circle cx="813.3" cy="555.5" r="1.05" fill="#9a9aa8" opacity="0.16"/>
<circle cx="782.7" cy="187.1" r="1.35" fill="#8fa0b8" opacity="0.60"/><circle cx="417.7" cy="457.1" r="1.35" fill="#8fa0b8" opacity="0.54"/><circle cx="416.2" cy="772.5" r="1.05" fill="#a8a190" opacity="0.12"/><circle cx="322.1" cy="278.8" r="1.05" fill="#b0a0a8" opacity="0.16"/><circle cx="380.4" cy="226.7" r="1.05" fill="#8e8e8e" opacity="0.13"/><circle cx="1116.2" cy="144.8" r="1.20" fill="#c4b69a" opacity="0.29"/>
<circle cx="533.4" cy="660.4" r="1.05" fill="#9a9aa8" opacity="0.17"/><circle cx="1082.6" cy="161.0" r="1.35" fill="#a89a8e" opacity="0.60"/><circle cx="1329.0" cy="130.5" r="1.05" fill="#c4b69a" opacity="0.12"/><circle cx="69.4" cy="721.2" r="1.05" fill="#9aa6b4" opacity="0.09"/><circle cx="716.4" cy="129.4" r="1.05" fill="#8e8e8e" opacity="0.14"/><circle cx="462.9" cy="465.5" r="1.05" fill="#b0a0a8" opacity="0.14"/>
<circle cx="134.3" cy="586.2" r="1.35" fill="#a8a190" opacity="0.52"/><circle cx="1031.5" cy="767.3" r="1.05" fill="#8e8e8e" opacity="0.17"/><circle cx="13.3" cy="739.2" r="1.20" fill="#9aa6b4" opacity="0.30"/><circle cx="1044.3" cy="103.1" r="1.20" fill="#a89a8e" opacity="0.20"/><circle cx="1342.5" cy="268.0" r="1.05" fill="#9a9aa8" opacity="0.16"/><circle cx="163.4" cy="587.5" r="1.05" fill="#a89a8e" opacity="0.15"/>
<circle cx="295.1" cy="667.9" r="1.05" fill="#8fa0b8" opacity="0.12"/><circle cx="1470.6" cy="677.4" r="1.05" fill="#a8a190" opacity="0.09"/><circle cx="906.4" cy="518.9" r="1.20" fill="#b9b09c" opacity="0.31"/><circle cx="1510.9" cy="417.8" r="1.05" fill="#9aa6b4" opacity="0.10"/><circle cx="963.6" cy="517.6" r="1.05" fill="#9a9aa8" opacity="0.11"/><circle cx="708.7" cy="777.2" r="1.05" fill="#b0a0a8" opacity="0.08"/>
<circle cx="766.6" cy="209.0" r="1.05" fill="#c0a890" opacity="0.08"/><circle cx="1367.7" cy="638.9" r="1.05" fill="#b9b09c" opacity="0.11"/><circle cx="822.9" cy="362.4" r="1.05" fill="#9a9aa8" opacity="0.13"/><circle cx="1445.5" cy="168.3" r="1.05" fill="#c0a890" opacity="0.13"/><circle cx="1079.7" cy="473.0" r="1.05" fill="#8fa0b8" opacity="0.15"/><circle cx="736.3" cy="778.3" r="1.35" fill="#a89a8e" opacity="0.61"/>
<circle cx="1537.9" cy="512.6" r="1.20" fill="#8e8e8e" opacity="0.21"/><circle cx="974.0" cy="268.6" r="1.20" fill="#b0a0a8" opacity="0.35"/><circle cx="1049.7" cy="147.5" r="1.20" fill="#b9b09c" opacity="0.28"/><circle cx="1356.1" cy="212.2" r="1.20" fill="#9a9aa8" opacity="0.31"/><circle cx="1056.1" cy="325.2" r="1.20" fill="#8fa0b8" opacity="0.27"/><circle cx="384.1" cy="377.7" r="1.05" fill="#c4b69a" opacity="0.11"/>
<circle cx="876.4" cy="128.9" r="1.20" fill="#a8a190" opacity="0.24"/><circle cx="299.9" cy="550.7" r="1.20" fill="#b0a0a8" opacity="0.24"/><circle cx="362.3" cy="477.0" r="1.05" fill="#c0a890" opacity="0.14"/><circle cx="906.4" cy="687.8" r="1.20" fill="#9a9aa8" opacity="0.33"/><circle cx="1380.7" cy="460.2" r="1.20" fill="#a8a190" opacity="0.32"/><circle cx="1001.9" cy="770.0" r="1.05" fill="#a89a8e" opacity="0.14"/>
<circle cx="870.3" cy="775.8" r="1.05" fill="#a8a190" opacity="0.14"/><circle cx="218.7" cy="630.8" r="1.05" fill="#8e8e8e" opacity="0.11"/><circle cx="66.7" cy="574.7" r="1.35" fill="#a8a190" opacity="0.49"/><circle cx="1131.2" cy="366.0" r="1.35" fill="#c4b69a" opacity="0.54"/><circle cx="900.2" cy="737.6" r="1.20" fill="#8e8e8e" opacity="0.23"/><circle cx="1285.8" cy="600.5" r="1.05" fill="#c4b69a" opacity="0.11"/>
<circle cx="596.5" cy="601.4" r="1.35" fill="#b9b09c" opacity="0.57"/><circle cx="1305.7" cy="311.2" r="1.05" fill="#c0a890" opacity="0.12"/><circle cx="180.6" cy="743.6" r="1.20" fill="#c4b69a" opacity="0.24"/><circle cx="1109.6" cy="60.1" r="1.35" fill="#b9b09c" opacity="0.49"/><circle cx="780.4" cy="99.8" r="1.05" fill="#9aa6b4" opacity="0.10"/><circle cx="1397.1" cy="550.2" r="1.20" fill="#9aa6b4" opacity="0.29"/>
<circle cx="861.0" cy="565.3" r="1.20" fill="#b9b09c" opacity="0.35"/><circle cx="39.6" cy="795.8" r="1.05" fill="#b9b09c" opacity="0.14"/><circle cx="1279.9" cy="70.8" r="1.05" fill="#c0a890" opacity="0.18"/><circle cx="627.7" cy="403.7" r="1.05" fill="#a89a8e" opacity="0.18"/><circle cx="366.5" cy="768.2" r="1.05" fill="#8fa0b8" opacity="0.12"/><circle cx="345.9" cy="719.9" r="1.20" fill="#9a9aa8" opacity="0.21"/>
<circle cx="1309.9" cy="593.8" r="1.05" fill="#8e8e8e" opacity="0.14"/><circle cx="502.7" cy="297.6" r="1.05" fill="#c4b69a" opacity="0.11"/><circle cx="734.6" cy="789.7" r="1.05" fill="#9a9aa8" opacity="0.10"/><circle cx="436.0" cy="250.6" r="1.05" fill="#c0a890" opacity="0.11"/><circle cx="917.1" cy="485.8" r="1.05" fill="#8fa0b8" opacity="0.16"/><circle cx="1443.3" cy="116.0" r="1.05" fill="#c0a890" opacity="0.13"/>
<circle cx="1014.8" cy="318.4" r="1.05" fill="#9a9aa8" opacity="0.18"/><circle cx="1089.5" cy="273.8" r="1.20" fill="#8fa0b8" opacity="0.32"/><circle cx="1364.3" cy="229.4" r="1.20" fill="#8e8e8e" opacity="0.31"/><circle cx="96.7" cy="298.9" r="1.05" fill="#b0a0a8" opacity="0.20"/><circle cx="805.5" cy="720.0" r="1.20" fill="#9a9aa8" opacity="0.36"/><circle cx="216.9" cy="49.5" r="1.20" fill="#b0a0a8" opacity="0.27"/>
<circle cx="633.3" cy="627.9" r="1.35" fill="#9a9aa8" opacity="0.53"/><circle cx="482.1" cy="277.2" r="1.20" fill="#8e8e8e" opacity="0.29"/><circle cx="117.5" cy="187.8" r="1.35" fill="#9aa6b4" opacity="0.53"/><circle cx="928.2" cy="790.5" r="1.05" fill="#a89a8e" opacity="0.17"/><circle cx="1153.2" cy="741.0" r="1.20" fill="#9a9aa8" opacity="0.25"/><circle cx="441.1" cy="238.7" r="1.05" fill="#9aa6b4" opacity="0.10"/>
<circle cx="378.8" cy="59.2" r="1.05" fill="#c0a890" opacity="0.13"/><circle cx="451.9" cy="423.4" r="1.05" fill="#b9b09c" opacity="0.11"/><circle cx="1540.1" cy="498.4" r="1.05" fill="#c0a890" opacity="0.18"/><circle cx="545.5" cy="147.3" r="1.05" fill="#b9b09c" opacity="0.14"/><circle cx="1023.2" cy="741.7" r="1.05" fill="#b9b09c" opacity="0.12"/><circle cx="1037.6" cy="350.4" r="1.20" fill="#b9b09c" opacity="0.25"/>
<circle cx="1380.4" cy="646.0" r="1.05" fill="#b0a0a8" opacity="0.15"/><circle cx="1579.5" cy="346.1" r="1.35" fill="#b9b09c" opacity="0.61"/><circle cx="1479.5" cy="470.5" r="1.35" fill="#c0a890" opacity="0.38"/><circle cx="1135.5" cy="675.2" r="1.05" fill="#c4b69a" opacity="0.08"/><circle cx="228.1" cy="624.0" r="1.05" fill="#a89a8e" opacity="0.18"/><circle cx="550.2" cy="558.2" r="1.20" fill="#c0a890" opacity="0.22"/>
<circle cx="919.4" cy="217.9" r="1.20" fill="#b0a0a8" opacity="0.33"/><circle cx="1220.5" cy="630.6" r="1.05" fill="#b0a0a8" opacity="0.17"/><circle cx="894.3" cy="317.2" r="1.05" fill="#9aa6b4" opacity="0.11"/><circle cx="14.5" cy="403.7" r="1.20" fill="#8e8e8e" opacity="0.32"/><circle cx="240.8" cy="519.5" r="1.05" fill="#b9b09c" opacity="0.20"/><circle cx="998.8" cy="136.4" r="1.05" fill="#9a9aa8" opacity="0.10"/>
<circle cx="414.3" cy="502.2" r="1.20" fill="#9a9aa8" opacity="0.34"/><circle cx="845.1" cy="309.2" r="1.20" fill="#b0a0a8" opacity="0.27"/><circle cx="340.8" cy="733.7" r="1.35" fill="#c4b69a" opacity="0.47"/><circle cx="517.8" cy="727.0" r="1.05" fill="#a8a190" opacity="0.17"/><circle cx="1290.0" cy="734.7" r="1.20" fill="#c4b69a" opacity="0.26"/><circle cx="902.2" cy="353.9" r="1.35" fill="#c4b69a" opacity="0.63"/>
<circle cx="49.1" cy="59.7" r="1.20" fill="#8e8e8e" opacity="0.24"/><circle cx="324.9" cy="617.9" r="1.20" fill="#b0a0a8" opacity="0.25"/><circle cx="346.4" cy="474.6" r="1.05" fill="#9aa6b4" opacity="0.18"/><circle cx="1525.9" cy="147.2" r="1.05" fill="#b9b09c" opacity="0.09"/><circle cx="776.4" cy="717.6" r="1.05" fill="#c0a890" opacity="0.16"/><circle cx="1530.0" cy="204.3" r="1.05" fill="#8e8e8e" opacity="0.17"/>
<circle cx="73.9" cy="629.1" r="1.05" fill="#9a9aa8" opacity="0.13"/><circle cx="1590.7" cy="269.0" r="1.05" fill="#b9b09c" opacity="0.09"/><circle cx="213.3" cy="272.8" r="1.05" fill="#9a9aa8" opacity="0.12"/><circle cx="742.7" cy="344.3" r="1.05" fill="#a89a8e" opacity="0.16"/><circle cx="1410.2" cy="784.6" r="1.05" fill="#b9b09c" opacity="0.11"/><circle cx="60.6" cy="425.6" r="1.05" fill="#a8a190" opacity="0.13"/>
<circle cx="1164.9" cy="80.5" r="1.35" fill="#a8a190" opacity="0.38"/><circle cx="192.6" cy="412.4" r="1.05" fill="#9a9aa8" opacity="0.13"/><circle cx="358.0" cy="452.6" r="1.20" fill="#a8a190" opacity="0.29"/><circle cx="847.4" cy="678.7" r="1.35" fill="#c4b69a" opacity="0.38"/><circle cx="1364.2" cy="778.9" r="1.05" fill="#9a9aa8" opacity="0.09"/><circle cx="24.3" cy="247.4" r="1.35" fill="#b9b09c" opacity="0.42"/>
<circle cx="652.6" cy="464.8" r="1.05" fill="#b9b09c" opacity="0.08"/><circle cx="1044.3" cy="455.2" r="1.05" fill="#9aa6b4" opacity="0.16"/><circle cx="638.5" cy="284.6" r="1.05" fill="#a89a8e" opacity="0.20"/><circle cx="1216.8" cy="710.5" r="1.20" fill="#b9b09c" opacity="0.34"/><circle cx="382.3" cy="422.8" r="1.35" fill="#a89a8e" opacity="0.56"/><circle cx="1584.6" cy="668.1" r="1.20" fill="#c0a890" opacity="0.21"/>
<circle cx="1253.6" cy="730.8" r="1.05" fill="#8e8e8e" opacity="0.16"/><circle cx="1095.1" cy="378.5" r="1.20" fill="#c0a890" opacity="0.27"/><circle cx="1.5" cy="608.1" r="1.20" fill="#c0a890" opacity="0.28"/><circle cx="873.3" cy="331.2" r="1.20" fill="#a89a8e" opacity="0.33"/><circle cx="568.0" cy="92.5" r="1.35" fill="#8e8e8e" opacity="0.44"/><circle cx="115.1" cy="646.8" r="1.20" fill="#9aa6b4" opacity="0.35"/>
<circle cx="419.4" cy="679.8" r="1.20" fill="#c0a890" opacity="0.26"/><circle cx="762.1" cy="211.2" r="1.05" fill="#8fa0b8" opacity="0.19"/><circle cx="582.2" cy="198.9" r="1.05" fill="#9a9aa8" opacity="0.12"/><circle cx="243.8" cy="544.3" r="1.05" fill="#b9b09c" opacity="0.19"/><circle cx="514.8" cy="317.5" r="1.20" fill="#a89a8e" opacity="0.27"/><circle cx="246.0" cy="234.1" r="1.05" fill="#8fa0b8" opacity="0.12"/>
<circle cx="833.6" cy="386.3" r="1.05" fill="#b0a0a8" opacity="0.13"/><circle cx="1111.3" cy="383.7" r="1.05" fill="#8fa0b8" opacity="0.18"/><circle cx="239.7" cy="558.2" r="1.05" fill="#c4b69a" opacity="0.14"/><circle cx="995.8" cy="439.7" r="1.20" fill="#8fa0b8" opacity="0.24"/><circle cx="321.2" cy="475.3" r="1.05" fill="#8fa0b8" opacity="0.10"/><circle cx="439.1" cy="289.0" r="1.05" fill="#a8a190" opacity="0.18"/>
<circle cx="839.8" cy="417.0" r="1.05" fill="#9aa6b4" opacity="0.10"/><circle cx="988.0" cy="324.9" r="1.05" fill="#8e8e8e" opacity="0.13"/><circle cx="66.8" cy="613.3" r="1.35" fill="#c0a890" opacity="0.48"/><circle cx="1296.5" cy="310.4" r="1.05" fill="#c0a890" opacity="0.15"/><circle cx="306.4" cy="778.4" r="1.20" fill="#c4b69a" opacity="0.26"/><circle cx="526.8" cy="97.5" r="1.20" fill="#8fa0b8" opacity="0.26"/>
<circle cx="663.1" cy="751.4" r="1.20" fill="#a8a190" opacity="0.33"/><circle cx="947.8" cy="393.7" r="1.05" fill="#a89a8e" opacity="0.18"/><circle cx="1590.9" cy="177.2" r="1.05" fill="#9a9aa8" opacity="0.13"/><circle cx="818.4" cy="667.5" r="1.20" fill="#a89a8e" opacity="0.32"/><circle cx="866.1" cy="743.9" r="1.05" fill="#a89a8e" opacity="0.12"/><circle cx="1231.0" cy="133.3" r="1.05" fill="#b9b09c" opacity="0.09"/>
<circle cx="162.6" cy="110.7" r="1.20" fill="#b9b09c" opacity="0.29"/><circle cx="1317.6" cy="195.1" r="1.05" fill="#8fa0b8" opacity="0.18"/><circle cx="1104.9" cy="360.0" r="1.20" fill="#b9b09c" opacity="0.36"/><circle cx="1394.2" cy="154.0" r="1.05" fill="#b9b09c" opacity="0.14"/><circle cx="297.6" cy="451.4" r="1.05" fill="#a89a8e" opacity="0.09"/><circle cx="407.8" cy="693.3" r="1.20" fill="#a89a8e" opacity="0.28"/>
<circle cx="1089.0" cy="276.0" r="1.05" fill="#a89a8e" opacity="0.13"/><circle cx="1369.8" cy="238.4" r="1.05" fill="#8fa0b8" opacity="0.09"/><circle cx="1043.0" cy="748.9" r="1.20" fill="#9a9aa8" opacity="0.31"/><circle cx="584.8" cy="649.9" r="1.05" fill="#8fa0b8" opacity="0.19"/><circle cx="1061.6" cy="595.3" r="1.05" fill="#c0a890" opacity="0.09"/><circle cx="1316.6" cy="70.7" r="1.05" fill="#c4b69a" opacity="0.13"/>
<circle cx="1136.2" cy="650.7" r="1.20" fill="#b0a0a8" opacity="0.27"/><circle cx="326.0" cy="197.6" r="1.05" fill="#a8a190" opacity="0.18"/><circle cx="78.3" cy="696.1" r="1.05" fill="#9a9aa8" opacity="0.15"/><circle cx="22.7" cy="589.3" r="1.20" fill="#c4b69a" opacity="0.23"/><circle cx="1077.5" cy="554.3" r="1.05" fill="#9a9aa8" opacity="0.11"/><circle cx="233.1" cy="737.9" r="1.05" fill="#a8a190" opacity="0.09"/>
<circle cx="322.4" cy="113.2" r="1.05" fill="#9aa6b4" opacity="0.11"/><circle cx="1129.2" cy="378.5" r="1.05" fill="#9a9aa8" opacity="0.18"/><circle cx="66.8" cy="676.1" r="1.05" fill="#c0a890" opacity="0.11"/><circle cx="1274.7" cy="578.4" r="1.20" fill="#9aa6b4" opacity="0.25"/><circle cx="518.7" cy="680.0" r="1.05" fill="#c4b69a" opacity="0.18"/><circle cx="626.0" cy="68.9" r="1.05" fill="#c4b69a" opacity="0.16"/>
<circle cx="1047.1" cy="568.8" r="1.05" fill="#9a9aa8" opacity="0.10"/><circle cx="687.3" cy="557.3" r="1.05" fill="#a8a190" opacity="0.18"/><circle cx="1051.3" cy="203.1" r="1.20" fill="#a8a190" opacity="0.28"/><circle cx="464.9" cy="307.0" r="1.20" fill="#a8a190" opacity="0.28"/><circle cx="320.6" cy="255.7" r="1.05" fill="#a8a190" opacity="0.15"/><circle cx="321.9" cy="399.7" r="1.20" fill="#c4b69a" opacity="0.32"/>
<circle cx="925.5" cy="270.7" r="1.20" fill="#b9b09c" opacity="0.22"/><circle cx="550.5" cy="758.0" r="1.20" fill="#8e8e8e" opacity="0.21"/><circle cx="560.0" cy="407.7" r="1.05" fill="#a8a190" opacity="0.12"/><circle cx="1259.6" cy="269.5" r="1.05" fill="#a8a190" opacity="0.15"/><circle cx="1194.4" cy="129.4" r="1.05" fill="#b9b09c" opacity="0.13"/><circle cx="53.9" cy="432.1" r="1.05" fill="#9a9aa8" opacity="0.16"/>
<circle cx="664.1" cy="676.9" r="1.05" fill="#9a9aa8" opacity="0.17"/><circle cx="574.7" cy="545.0" r="1.05" fill="#b0a0a8" opacity="0.08"/><circle cx="485.1" cy="241.5" r="1.05" fill="#9a9aa8" opacity="0.11"/><circle cx="793.3" cy="449.2" r="1.05" fill="#9a9aa8" opacity="0.14"/><circle cx="908.8" cy="75.8" r="1.05" fill="#9aa6b4" opacity="0.19"/><circle cx="645.5" cy="197.8" r="1.05" fill="#8fa0b8" opacity="0.11"/>
<circle cx="802.4" cy="717.3" r="1.05" fill="#b0a0a8" opacity="0.19"/><circle cx="1265.9" cy="574.3" r="1.05" fill="#a8a190" opacity="0.17"/><circle cx="1199.3" cy="160.2" r="1.05" fill="#a89a8e" opacity="0.08"/><circle cx="998.2" cy="126.9" r="1.20" fill="#c0a890" opacity="0.22"/><circle cx="348.0" cy="228.1" r="1.20" fill="#b9b09c" opacity="0.28"/><circle cx="1313.4" cy="99.2" r="1.05" fill="#c4b69a" opacity="0.09"/>
<circle cx="988.6" cy="567.0" r="1.20" fill="#b0a0a8" opacity="0.25"/><circle cx="946.4" cy="182.2" r="1.05" fill="#a89a8e" opacity="0.19"/><circle cx="51.6" cy="640.2" r="1.05" fill="#9a9aa8" opacity="0.14"/><circle cx="241.8" cy="304.3" r="1.05" fill="#c4b69a" opacity="0.10"/><circle cx="1097.0" cy="579.7" r="1.05" fill="#b0a0a8" opacity="0.08"/><circle cx="60.3" cy="441.3" r="1.05" fill="#c0a890" opacity="0.09"/>
<circle cx="1017.6" cy="194.5" r="1.20" fill="#a89a8e" opacity="0.34"/><circle cx="147.7" cy="586.4" r="1.05" fill="#b0a0a8" opacity="0.10"/><circle cx="1075.7" cy="607.6" r="1.05" fill="#9aa6b4" opacity="0.18"/><circle cx="1446.8" cy="607.2" r="1.20" fill="#c0a890" opacity="0.33"/><circle cx="263.4" cy="335.7" r="1.20" fill="#8fa0b8" opacity="0.35"/><circle cx="478.1" cy="770.5" r="1.05" fill="#a8a190" opacity="0.19"/>
<circle cx="108.8" cy="636.1" r="1.20" fill="#c4b69a" opacity="0.32"/><circle cx="383.9" cy="488.2" r="1.20" fill="#c0a890" opacity="0.34"/><circle cx="1452.1" cy="562.1" r="1.20" fill="#a89a8e" opacity="0.26"/><circle cx="1269.0" cy="560.2" r="1.35" fill="#a89a8e" opacity="0.60"/><circle cx="1516.0" cy="216.6" r="1.20" fill="#c0a890" opacity="0.33"/><circle cx="1445.7" cy="366.5" r="1.05" fill="#c0a890" opacity="0.12"/>
<circle cx="26.1" cy="127.6" r="1.20" fill="#c0a890" opacity="0.27"/><circle cx="478.8" cy="154.2" r="1.05" fill="#a89a8e" opacity="0.09"/><circle cx="1350.4" cy="512.2" r="1.05" fill="#9aa6b4" opacity="0.09"/><circle cx="299.5" cy="716.5" r="1.05" fill="#c4b69a" opacity="0.14"/><circle cx="193.0" cy="560.3" r="1.05" fill="#9a9aa8" opacity="0.18"/><circle cx="623.1" cy="295.5" r="1.05" fill="#8e8e8e" opacity="0.10"/>
<circle cx="1422.9" cy="505.3" r="1.35" fill="#b0a0a8" opacity="0.47"/><circle cx="509.3" cy="706.4" r="1.20" fill="#9a9aa8" opacity="0.30"/><circle cx="625.1" cy="50.8" r="1.20" fill="#c4b69a" opacity="0.22"/><circle cx="726.9" cy="655.9" r="1.05" fill="#a8a190" opacity="0.12"/><circle cx="1574.2" cy="599.3" r="1.20" fill="#9a9aa8" opacity="0.31"/><circle cx="1484.9" cy="719.7" r="1.20" fill="#c0a890" opacity="0.21"/>
<circle cx="529.5" cy="245.4" r="1.05" fill="#a89a8e" opacity="0.12"/><circle cx="1499.6" cy="655.4" r="1.05" fill="#b0a0a8" opacity="0.16"/><circle cx="581.6" cy="782.0" r="1.05" fill="#a8a190" opacity="0.18"/><circle cx="891.3" cy="382.5" r="1.20" fill="#c0a890" opacity="0.34"/><circle cx="1199.0" cy="70.5" r="1.05" fill="#9aa6b4" opacity="0.10"/><circle cx="231.1" cy="488.2" r="1.20" fill="#a89a8e" opacity="0.21"/>
<circle cx="277.6" cy="489.7" r="1.35" fill="#c4b69a" opacity="0.54"/><circle cx="465.6" cy="455.5" r="1.05" fill="#a8a190" opacity="0.20"/><circle cx="1287.0" cy="555.4" r="1.05" fill="#8e8e8e" opacity="0.20"/><circle cx="1104.7" cy="253.8" r="1.05" fill="#b9b09c" opacity="0.15"/><circle cx="1269.1" cy="306.5" r="1.05" fill="#b9b09c" opacity="0.14"/><circle cx="259.3" cy="602.2" r="1.05" fill="#b9b09c" opacity="0.12"/>
<circle cx="939.1" cy="778.4" r="1.20" fill="#9a9aa8" opacity="0.26"/><circle cx="435.5" cy="717.8" r="1.05" fill="#b0a0a8" opacity="0.15"/><circle cx="644.5" cy="559.3" r="1.05" fill="#b0a0a8" opacity="0.12"/><circle cx="426.7" cy="198.2" r="1.35" fill="#a89a8e" opacity="0.49"/><circle cx="1018.7" cy="632.7" r="1.05" fill="#8fa0b8" opacity="0.10"/><circle cx="751.9" cy="466.4" r="1.20" fill="#9aa6b4" opacity="0.32"/>
<circle cx="626.2" cy="586.3" r="1.05" fill="#a8a190" opacity="0.18"/><circle cx="415.3" cy="627.2" r="1.05" fill="#c0a890" opacity="0.18"/><circle cx="488.6" cy="499.2" r="1.05" fill="#a8a190" opacity="0.20"/><circle cx="1400.1" cy="116.9" r="1.20" fill="#a8a190" opacity="0.33"/><circle cx="1487.1" cy="169.4" r="1.05" fill="#a8a190" opacity="0.17"/><circle cx="1238.6" cy="342.2" r="1.35" fill="#8e8e8e" opacity="0.58"/>
<circle cx="639.6" cy="421.9" r="1.05" fill="#9a9aa8" opacity="0.18"/><circle cx="850.3" cy="438.0" r="1.20" fill="#9a9aa8" opacity="0.34"/><circle cx="340.7" cy="559.5" r="1.35" fill="#b9b09c" opacity="0.38"/><circle cx="1362.2" cy="548.9" r="1.20" fill="#c0a890" opacity="0.26"/><circle cx="1165.3" cy="637.6" r="1.20" fill="#9a9aa8" opacity="0.34"/><circle cx="241.7" cy="551.7" r="1.20" fill="#9aa6b4" opacity="0.28"/>
<circle cx="1437.2" cy="605.7" r="1.20" fill="#9aa6b4" opacity="0.30"/><circle cx="209.9" cy="576.3" r="1.20" fill="#9aa6b4" opacity="0.30"/><circle cx="1138.5" cy="627.3" r="1.20" fill="#c0a890" opacity="0.28"/><circle cx="340.7" cy="213.2" r="1.05" fill="#a8a190" opacity="0.16"/><circle cx="575.2" cy="572.8" r="1.05" fill="#8e8e8e" opacity="0.18"/><circle cx="349.2" cy="390.0" r="1.20" fill="#8fa0b8" opacity="0.27"/>
<circle cx="94.5" cy="381.0" r="1.20" fill="#b9b09c" opacity="0.33"/><circle cx="860.0" cy="397.5" r="1.05" fill="#8e8e8e" opacity="0.12"/><circle cx="1542.6" cy="445.2" r="1.05" fill="#c4b69a" opacity="0.15"/><circle cx="450.5" cy="780.3" r="1.20" fill="#c4b69a" opacity="0.31"/><circle cx="1244.2" cy="65.4" r="1.05" fill="#a8a190" opacity="0.13"/><circle cx="1526.3" cy="250.9" r="1.05" fill="#a89a8e" opacity="0.09"/>
<circle cx="818.8" cy="489.1" r="1.05" fill="#b9b09c" opacity="0.18"/><circle cx="1285.9" cy="770.8" r="1.05" fill="#a8a190" opacity="0.20"/><circle cx="1026.2" cy="479.2" r="1.05" fill="#c0a890" opacity="0.20"/><circle cx="727.0" cy="302.3" r="1.05" fill="#9aa6b4" opacity="0.13"/><circle cx="1214.5" cy="101.8" r="1.35" fill="#c4b69a" opacity="0.36"/><circle cx="1263.6" cy="605.8" r="1.20" fill="#9aa6b4" opacity="0.23"/>
<circle cx="1195.5" cy="760.9" r="1.35" fill="#b9b09c" opacity="0.57"/><circle cx="100.3" cy="199.5" r="1.05" fill="#8fa0b8" opacity="0.18"/><circle cx="421.8" cy="312.7" r="1.05" fill="#8e8e8e" opacity="0.16"/><circle cx="488.9" cy="77.4" r="1.05" fill="#b9b09c" opacity="0.12"/><circle cx="1286.4" cy="388.0" r="1.05" fill="#9a9aa8" opacity="0.09"/><circle cx="581.8" cy="712.5" r="1.05" fill="#8e8e8e" opacity="0.09"/>
<circle cx="1270.8" cy="404.0" r="1.20" fill="#a8a190" opacity="0.22"/><circle cx="844.8" cy="233.9" r="1.05" fill="#b9b09c" opacity="0.12"/><circle cx="1499.1" cy="190.0" r="1.05" fill="#8fa0b8" opacity="0.18"/><circle cx="698.4" cy="597.7" r="1.05" fill="#a89a8e" opacity="0.18"/><circle cx="214.0" cy="53.7" r="1.05" fill="#a89a8e" opacity="0.15"/><circle cx="44.1" cy="658.8" r="1.35" fill="#b9b09c" opacity="0.38"/>
<circle cx="326.1" cy="477.1" r="1.35" fill="#8e8e8e" opacity="0.61"/><circle cx="998.7" cy="713.3" r="1.05" fill="#c4b69a" opacity="0.16"/><circle cx="11.7" cy="198.6" r="1.05" fill="#a8a190" opacity="0.19"/><circle cx="945.4" cy="139.4" r="1.05" fill="#c0a890" opacity="0.13"/><circle cx="1471.8" cy="562.1" r="1.35" fill="#c0a890" opacity="0.58"/><circle cx="1158.4" cy="84.6" r="1.05" fill="#c4b69a" opacity="0.13"/>
<circle cx="1146.2" cy="399.0" r="1.35" fill="#a8a190" opacity="0.54"/><circle cx="1453.5" cy="496.9" r="1.05" fill="#c4b69a" opacity="0.11"/><circle cx="7.8" cy="472.0" r="1.20" fill="#b9b09c" opacity="0.24"/><circle cx="388.0" cy="730.4" r="1.05" fill="#b0a0a8" opacity="0.08"/><circle cx="77.8" cy="225.8" r="1.35" fill="#b9b09c" opacity="0.42"/><circle cx="1487.6" cy="526.8" r="1.35" fill="#9a9aa8" opacity="0.44"/>
<circle cx="748.2" cy="406.0" r="1.35" fill="#a8a190" opacity="0.58"/><circle cx="298.9" cy="654.1" r="1.05" fill="#a8a190" opacity="0.14"/><circle cx="815.2" cy="767.3" r="1.05" fill="#a8a190" opacity="0.19"/><circle cx="1361.4" cy="464.3" r="1.20" fill="#c0a890" opacity="0.28"/><circle cx="979.9" cy="642.6" r="1.05" fill="#8fa0b8" opacity="0.16"/><circle cx="983.5" cy="389.6" r="1.20" fill="#c4b69a" opacity="0.29"/>
<circle cx="38.5" cy="671.2" r="1.20" fill="#a8a190" opacity="0.27"/><circle cx="1132.3" cy="600.1" r="1.20" fill="#c0a890" opacity="0.36"/><circle cx="1561.4" cy="456.9" r="1.05" fill="#c4b69a" opacity="0.09"/><circle cx="1358.7" cy="685.3" r="1.05" fill="#9aa6b4" opacity="0.12"/><circle cx="494.4" cy="267.6" r="1.05" fill="#8e8e8e" opacity="0.15"/><circle cx="1229.3" cy="49.2" r="1.05" fill="#c0a890" opacity="0.09"/>
<circle cx="342.0" cy="335.3" r="1.35" fill="#c0a890" opacity="0.63"/><circle cx="1037.1" cy="736.8" r="1.20" fill="#b9b09c" opacity="0.33"/><circle cx="1338.7" cy="585.8" r="1.05" fill="#a89a8e" opacity="0.16"/><circle cx="1281.0" cy="85.4" r="1.20" fill="#9aa6b4" opacity="0.25"/><circle cx="766.0" cy="314.0" r="1.2" fill="#8fa8e0" opacity="0.90"/><circle cx="1486.0" cy="296.0" r="1.2" fill="#b8b8c0" opacity="0.70"/><circle cx="905.0" cy="303.0" r="1.2" fill="#c0b8a0" opacity="0.60"/><circle cx="971.0" cy="283.0" r="1.2" fill="#b0b0b0" opacity="0.55"/><circle cx="1418.0" cy="240.0" r="1.2" fill="#b0b0b8" opacity="0.60"/><circle cx="1417.0" cy="575.0" r="1.2" fill="#c8c8b0" opacity="0.80"/><circle cx="1416.0" cy="648.0" r="1.2" fill="#c0d0f0" opacity="0.70"/><circle cx="1412.0" cy="691.0" r="1.2" fill="#e0b0b0" opacity="0.70"/><circle cx="829.0" cy="661.0" r="1.2" fill="#c0c0c0" opacity="0.60"/><circle cx="1282.0" cy="787.0" r="1.2" fill="#b0b0a0" opacity="0.60"/><circle cx="1157.0" cy="792.0" r="1.2" fill="#a0a8c0" opacity="0.60"/><circle cx="1358.0" cy="523.0" r="1.2" fill="#a0b0d0" opacity="0.70"/><circle cx="172.0" cy="661.0" r="1.2" fill="#c0b090" opacity="0.60"/><circle cx="229.0" cy="724.0" r="1.2" fill="#a8b0c0" opacity="0.60"/><circle cx="234.0" cy="726.0" r="1.2" fill="#b0a080" opacity="0.55"/><circle cx="136.0" cy="158.0" r="1.2" fill="#d0b070" opacity="0.70"/><circle cx="1400.0" cy="87.0" r="1.2" fill="#c8a870" opacity="0.60"/><circle cx="1418.0" cy="113.0" r="1.2" fill="#c0c0b0" opacity="0.65"/><circle cx="1451.0" cy="122.0" r="1.2" fill="#a09070" opacity="0.50"/>
</svg>
<svg id="planet" width="1599" height="757" viewBox="0 43 1599 757" style="position:absolute;left:0;top:0">
<defs>
<clipPath id="pc"><ellipse cx="1191" cy="320.7" rx="212.5" ry="206" transform="rotate(-14.3 1191 320.7)"/></clipPath>
<linearGradient id="sun" gradientUnits="userSpaceOnUse" x1="1191" y1="320.7" x2="1109" y2="130">
<stop offset="0" stop-color="#1a130f" stop-opacity="0"/>
<stop offset="0.15" stop-color="#1a0f0a" stop-opacity="0.85"/>
<stop offset="0.4" stop-color="#20120b"/>
<stop offset="0.7" stop-color="#2c1a10"/>
<stop offset="1" stop-color="#3e2416"/>
</linearGradient>
<linearGradient id="sunm" gradientUnits="userSpaceOnUse" x1="1191" y1="320.7" x2="1109" y2="130">
<stop offset="0" stop-color="#fff" stop-opacity="0"/>
<stop offset="0.04" stop-color="#fff" stop-opacity="0.07"/>
<stop offset="0.1" stop-color="#fff" stop-opacity="0.22"/>
<stop offset="0.2" stop-color="#fff" stop-opacity="0.38"/>
<stop offset="0.4" stop-color="#fff" stop-opacity="0.56"/>
<stop offset="0.72" stop-color="#fff" stop-opacity="0.8"/>
<stop offset="1" stop-color="#fff" stop-opacity="1"/>
</linearGradient>
<mask id="sunmask" maskUnits="userSpaceOnUse" x="960" y="100" width="460" height="445"><rect x="960" y="100" width="460" height="445" fill="url(#sunm)"/></mask>
<radialGradient id="rim" cx="0.5" cy="0.5" r="0.5">
<stop offset="0" stop-color="#a0623c" stop-opacity="0"/>
<stop offset="0.73" stop-color="#a0623c" stop-opacity="0"/>
<stop offset="0.8" stop-color="#a0623c" stop-opacity="0.1"/>
<stop offset="0.86" stop-color="#a0623c" stop-opacity="0.3"/>
<stop offset="0.9" stop-color="#aa6941" stop-opacity="0.55"/>
<stop offset="0.94" stop-color="#c07c50" stop-opacity="0.82"/>
<stop offset="0.97" stop-color="#dc9c6c" stop-opacity="0.95"/>
<stop offset="1" stop-color="#f0b98c" stop-opacity="1"/>
</radialGradient>
<radialGradient id="darkblob" gradientUnits="userSpaceOnUse" cx="1245" cy="285" r="120">
<stop offset="0" stop-color="#120a06" stop-opacity="0.8"/>
<stop offset="0.5" stop-color="#120a06" stop-opacity="0.5"/>
<stop offset="1" stop-color="#120a06" stop-opacity="0"/>
</radialGradient>
<radialGradient id="band1" cx="0.5" cy="0.5" r="0.5">
<stop offset="0" stop-color="#6e4025" stop-opacity="0.5"/>
<stop offset="0.5" stop-color="#6e4025" stop-opacity="0.28"/>
<stop offset="1" stop-color="#6e4025" stop-opacity="0"/>
</radialGradient>
<radialGradient id="nightg" cx="0.5" cy="0.5" r="0.5">
<stop offset="0" stop-color="#110c09"/><stop offset="0.55" stop-color="#16110e"/><stop offset="1" stop-color="#1e1a17"/>
</radialGradient>
<radialGradient id="leftblob" gradientUnits="userSpaceOnUse" cx="985" cy="335" r="115">
<stop offset="0" stop-color="#8a5836" stop-opacity="0.75"/>
<stop offset="0.55" stop-color="#7a4c2e" stop-opacity="0.4"/>
<stop offset="1" stop-color="#7a4c2e" stop-opacity="0"/>
</radialGradient>
<radialGradient id="grayblob" cx="0.5" cy="0.5" r="0.5">
<stop offset="0" stop-color="#a88c70" stop-opacity="1"/>
<stop offset="0.45" stop-color="#9a8068" stop-opacity="0.7"/>
<stop offset="0.75" stop-color="#8a7460" stop-opacity="0.3"/>
<stop offset="1" stop-color="#8a7460" stop-opacity="0"/>
</radialGradient>
</defs>
<g clip-path="url(#pc)">
<g transform="translate(1191 320.7) rotate(-14.3) scale(212.5 206)"><circle cx="0" cy="0" r="1.02" fill="url(#nightg)"/></g>
<rect x="960" y="100" width="460" height="445" fill="url(#sun)"/>
<rect x="960" y="100" width="460" height="445" fill="url(#darkblob)"/>
<g mask="url(#sunmask)">
<ellipse cx="1345" cy="160" rx="170" ry="85" transform="rotate(43 1345 160)" fill="url(#grayblob)"/>
<rect x="960" y="100" width="460" height="445" fill="url(#leftblob)"/>
<ellipse cx="1135" cy="215" rx="75" ry="125" transform="rotate(12 1135 215)" fill="url(#band1)"/>
<g transform="translate(1191 320.7) rotate(-14.3) scale(212.5 206)"><circle cx="0" cy="0" r="1.01" fill="url(#rim)"/></g>
</g>
</g>
</svg>
<svg id="moon" width="120" height="120" viewBox="165 625 120 120" style="position:absolute;left:165px;top:582px">
<defs>
<clipPath id="mc"><ellipse cx="224.6" cy="684.9" rx="39.9" ry="37.1" transform="rotate(-24.7 224.6 684.9)"/></clipPath>
<radialGradient id="mg1" gradientUnits="userSpaceOnUse" cx="215" cy="672" r="62">
<stop offset="0" stop-color="#332d2b"/><stop offset="0.5" stop-color="#242020"/><stop offset="1" stop-color="#161414"/>
</radialGradient>
<radialGradient id="mlimb" cx="0.5" cy="0.5" r="0.5">
<stop offset="0" stop-color="#000" stop-opacity="0"/><stop offset="0.75" stop-color="#000" stop-opacity="0"/><stop offset="1" stop-color="#000" stop-opacity="0.45"/>
</radialGradient>
<radialGradient id="mdark" cx="0.5" cy="0.5" r="0.5"><stop offset="0" stop-color="#141112" stop-opacity="0.85"/><stop offset="0.45" stop-color="#141112" stop-opacity="0.55"/><stop offset="1" stop-color="#141112" stop-opacity="0"/></radialGradient>
<filter id="mb" x="-50%" y="-50%" width="200%" height="200%"><feGaussianBlur stdDeviation="4"/></filter>
<filter id="mb2" x="-50%" y="-50%" width="200%" height="200%"><feGaussianBlur stdDeviation="1.5"/></filter>
</defs>
<g clip-path="url(#mc)">
<rect x="180" y="640" width="90" height="90" fill="url(#mg1)"/>
<ellipse cx="208" cy="670" rx="17" ry="9" transform="rotate(-28 208 670)" fill="#75675f" opacity="0.8" filter="url(#mb)"/>
<ellipse cx="243" cy="667" rx="12" ry="7" transform="rotate(15 243 667)" fill="#5a4f4a" opacity="0.6" filter="url(#mb)"/>
<ellipse cx="229" cy="686" rx="26" ry="17" fill="url(#mdark)"/>
<ellipse cx="226" cy="661" rx="7" ry="5" fill="#1a1615" opacity="0.7" filter="url(#mb)"/>
<ellipse cx="203" cy="700" rx="10" ry="12" fill="#38312e" opacity="0.5" filter="url(#mb)"/>
<path d="M196 661 Q210 647 228 647.5 Q240 648 250 656" stroke="#8a7a70" stroke-width="2" fill="none" opacity="0.7" filter="url(#mb2)"/>
<g transform="translate(224.6 684.9) rotate(-24.7) scale(39.9 37.1)"><circle r="1.02" fill="url(#mlimb)"/></g>
</g>
</svg>
<div class="ov" style="left:0;top:6px;font-size:20px;line-height:26px">冥王星 / 134340 Pluto</div>
<div class="ov" style="left:0;top:30px;line-height:16px">距离:7,692.0 千米</div>
<div class="ov" style="left:0;top:46px;line-height:16px">半径:1,151.0 千米</div>
<div class="ov" style="left:0;top:62px;line-height:16px">视直径:14° 57' 27.2"</div>
<div class="ov" style="left:0;top:78px;line-height:16px">相位角: 91.5°</div>
<div class="ov" style="left:1402px;top:3px;line-height:16px">2025 12 09 03:17:42 UTC</div>
<div class="ov" style="left:1402px;top:21px;line-height:16px">实时</div>
</div>
<div id="dlg">
<div id="dlgtitle"><span>显示设置</span>
<svg width="12" height="12" viewBox="0 0 12 12" style="position:absolute;left:494px;top:8px"><path d="M1 1L11 11M11 1L1 11" stroke="#1a1a1a" stroke-width="1.1" fill="none"/></svg>
</div>
<div id="dlgbody">
<div class="grp" style="left:207px;top:110px;width:342px;height:183px"></div><span class="lg" style="left:215px;top:103px">显示</span>
<div class="grp" style="left:564px;top:110px;width:135px;height:76px"></div>
<div class="grp" style="left:564px;top:197px;width:135px;height:97px"></div><span class="lg" style="left:572px;top:190px">坐标系</span>
<div class="grp" style="left:205px;top:312px;width:165px;height:183px"></div><span class="lg" style="left:213px;top:305px">轨道 / 标签</span>
<div class="grp" style="left:384px;top:312px;width:165px;height:95px"></div><span class="lg" style="left:392px;top:305px">深空间物体标签</span>
<div class="grp" style="left:384px;top:419px;width:165px;height:76px"></div><span class="lg" style="left:392px;top:412px">文字信息</span>
<div class="grp" style="left:564px;top:312px;width:135px;height:95px"></div><span class="lg" style="left:572px;top:305px">星座</span>
<div class="grp" style="left:564px;top:419px;width:135px;height:76px"></div><span class="lg" style="left:572px;top:412px">恒星筛选</span>
<i class="cb on" style="left:219px;top:123px"></i><span class="lb" style="left:235px;top:122px">星系</span>
<i class="cb on" style="left:219px;top:144px"></i><span class="lb" style="left:235px;top:143px">球状星团</span>
<i class="cb on" style="left:219px;top:166px"></i><span class="lb" style="left:235px;top:165px">疏散星团</span>
<i class="cb on" style="left:219px;top:187px"></i><span class="lb" style="left:235px;top:186px">星云</span>
<i class="cb on" style="left:219px;top:208px"></i><span class="lb" style="left:235px;top:207px">恒星</span>
<i class="cb on" style="left:219px;top:229px"></i><span class="lb" style="left:235px;top:228px">行星</span>
<div class="focus" style="left:234px;top:122px;width:28px;height:15px"></div>
<i class="cb on" style="left:397px;top:123px"></i><span class="lb" style="left:413px;top:122px">大气层</span>
<i class="cb on" style="left:397px;top:144px"></i><span class="lb" style="left:413px;top:143px">云层</span>
<i class="cb" style="left:397px;top:166px"></i><span class="lb" style="left:413px;top:165px">云层投影</span>
<i class="cb on" style="left:397px;top:187px"></i><span class="lb" style="left:413px;top:186px">星环投影</span>
<i class="cb on" style="left:397px;top:208px"></i><span class="lb" style="left:413px;top:207px">星月食投影</span>
<i class="cb" style="left:397px;top:229px"></i><span class="lb" style="left:413px;top:228px">夜视光</span>
<i class="cb on" style="left:397px;top:250px"></i><span class="lb" style="left:413px;top:249px">彗尾</span>
<i class="cb" style="left:576px;top:123px"></i><span class="lb" style="left:592px;top:122px">标记</span>
<i class="cb" style="left:576px;top:144px"></i><span class="lb" style="left:592px;top:143px">轨道</span>
<i class="cb" style="left:576px;top:166px"></i><span class="lb" style="left:592px;top:165px">黄道线</span>
<i class="cb" style="left:576px;top:208px"></i><span class="lb" style="left:592px;top:207px">赤道坐标系</span>
<i class="cb" style="left:576px;top:229px"></i><span class="lb" style="left:592px;top:228px">地平座标系</span>
<i class="cb" style="left:576px;top:250px"></i><span class="lb" style="left:592px;top:249px">银道座标系</span>
<i class="cb" style="left:576px;top:271px"></i><span class="lb" style="left:592px;top:270px">黄道座标系</span>
<i class="cb on" style="left:219px;top:325px"></i><i class="cb" style="left:246px;top:325px"></i><span class="lb" style="left:262px;top:324px">恒星</span>
<i class="cb on" style="left:219px;top:346px"></i><i class="cb" style="left:246px;top:346px"></i><span class="lb" style="left:262px;top:345px">行星</span>
<i class="cb" style="left:219px;top:367px"></i><i class="cb" style="left:246px;top:367px"></i><span class="lb" style="left:262px;top:366px">矮行星</span>
<i class="cb on" style="left:219px;top:388px"></i><i class="cb" style="left:246px;top:388px"></i><span class="lb" style="left:262px;top:387px">卫星</span>
<i class="cb" style="left:219px;top:409px"></i><i class="cb" style="left:246px;top:409px"></i><span class="lb" style="left:262px;top:408px">子卫星</span>
<i class="cb" style="left:219px;top:430px"></i><i class="cb" style="left:246px;top:430px"></i><span class="lb" style="left:262px;top:429px">小行星</span>
<i class="cb" style="left:219px;top:452px"></i><i class="cb" style="left:246px;top:452px"></i><span class="lb" style="left:262px;top:451px">彗星</span>
<i class="cb" style="left:219px;top:473px"></i><i class="cb" style="left:246px;top:473px"></i><span class="lb" style="left:262px;top:472px">航天器</span>
<i class="cb" style="left:397px;top:325px"></i><span class="lb" style="left:413px;top:324px">星系</span>
<i class="cb" style="left:397px;top:346px"></i><span class="lb" style="left:413px;top:345px">球状星团</span>
<i class="cb" style="left:397px;top:367px"></i><span class="lb" style="left:413px;top:366px">疏散星团</span>
<i class="cb" style="left:397px;top:388px"></i><span class="lb" style="left:413px;top:387px">星云</span>
<i class="rb" style="left:397px;top:432px"></i><span class="lb" style="left:413px;top:431px">无</span>
<i class="rb on" style="left:397px;top:453px"></i><span class="lb" style="left:413px;top:452px">简单</span>
<i class="rb" style="left:397px;top:474px"></i><span class="lb" style="left:413px;top:473px">详细</span>
<i class="cb" style="left:576px;top:325px"></i><span class="lb" style="left:592px;top:324px">星座线</span>
<i class="cb" style="left:576px;top:346px"></i><span class="lb" style="left:592px;top:345px">星座边界线</span>
<i class="cb" style="left:576px;top:367px"></i><span class="lb" style="left:592px;top:366px">标签</span>
<i class="cb on" style="left:576px;top:388px"></i><span class="lb" style="left:592px;top:387px">拉丁名</span>
<span class="lb" style="left:577px;top:429px">距离</span>
<div class="inp" style="left:577px;top:450px;width:64px;height:19px"><span>1000000</span></div>
<div class="track" style="left:578px;top:481px;width:103px;height:4px"></div>
<div class="thumb" style="left:671px;top:472px;width:10px;height:21px"></div>
<div class="btn def" style="left:391px;top:513px;width:73px">确定</div>
<div class="btn" style="left:473px;top:513px;width:73px">取消</div>
</div>
</div>
</body>
</html>
